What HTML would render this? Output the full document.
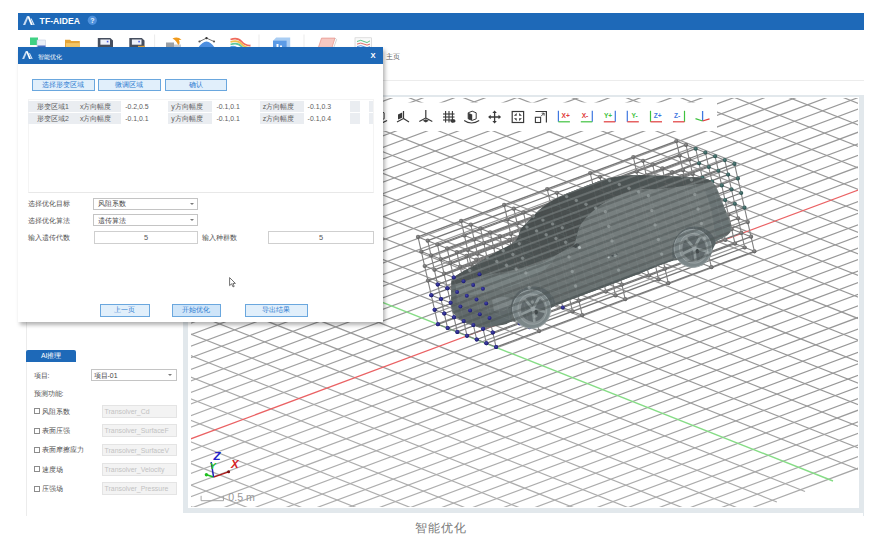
<!DOCTYPE html>
<html><head><meta charset="utf-8"><title>TF-AIDEA</title>
<style>
html,body{margin:0;padding:0;background:#fff;}
body{width:877px;height:548px;position:relative;overflow:hidden;font-family:"Liberation Sans",sans-serif;font-size:7px;color:#333;}
.abs{position:absolute;}

.tbar{left:18px;top:13px;width:846px;height:16.5px;background:#1e69b8;}
.ttl{font-size:8.6px;font-weight:bold;color:#fff;letter-spacing:0.05px;line-height:10px;white-space:nowrap;}
.frame{left:183px;top:94.5px;width:680.5px;height:418.5px;background:#e2e8ec;}
.inner{left:188px;top:97px;width:671px;height:410.5px;background:#fff;}
.lp{left:26px;top:322px;width:157px;height:194px;border-left:1px solid #ececec;box-sizing:border-box;background:#fff;}
.t7{font-size:6.75px;line-height:9px;white-space:nowrap;color:#505050;}
.dlg{left:18px;top:47px;width:365px;height:275px;background:#fff;box-shadow:1.5px 2.5px 4px rgba(0,0,0,0.3);}
.dttl{left:0;top:0;width:365px;height:16.7px;background:#1e69b8;}
.btn{top:31.7px;height:12.7px;border:1px solid #6aa7de;background:#e1effb;box-sizing:border-box;color:#2b7ad0;font-size:6.9px;line-height:10.5px;text-align:center;}
.list{left:9.5px;top:52px;width:346.5px;height:94px;border:1px solid #f4f4f4;border-bottom-color:#e8e8e8;box-sizing:border-box;}
.cell{height:10.9px;background:#eaedf1;}
.ct{font-size:6.9px;line-height:11px;color:#5c5c5c;white-space:nowrap;}
.combo{border:1px solid #c4c4c4;box-sizing:border-box;background:#fff;font-size:6.9px;color:#444;white-space:nowrap;}
.combo:after{content:"";position:absolute;right:3.2px;top:50%;margin-top:-1px;border:2.1px solid transparent;border-top:2.6px solid #7a7a7a;border-bottom:0;}
.inp{border:1px solid #cfcfcf;box-sizing:border-box;background:#fff;font-size:7.4px;color:#555;text-align:center;}
.dis{border:1px solid #e4e4e4;box-sizing:border-box;background:#f3f3f3;font-size:6.9px;color:#c2c2c2;white-space:nowrap;overflow:hidden;}
.cb{width:6.2px;height:6.2px;border:0.7px solid #8c8c8c;box-sizing:border-box;background:#fff;}

</style></head><body>
<div class="abs tbar"></div><svg class="abs" style="left:22.6px;top:15.6px" width="12.09" height="9.3" viewBox="0 0 13 10"><path d="M0 9.6 L4.2 0.4 H6.3 L2.4 9.6Z" fill="#c9dcf2"/><path d="M4.6 0.4 H6.7 L10.6 9.6 H8.4Z" fill="#fff"/><path d="M8.0 2.6 H9.3 L12.6 9.6 H11.2Z" fill="#dbe8f7"/></svg><div class="abs ttl" style="left:39.6px;top:15.6px;">TF-AIDEA</div><svg class="abs" style="left:87px;top:15px" width="11" height="11" viewBox="0 0 11 11"><circle cx="5.3" cy="5.3" r="4.6" fill="#4f92dd"/><text x="5.3" y="8" font-size="7" font-weight="bold" fill="#e8f1fb" text-anchor="middle" font-family="Liberation Sans, sans-serif">?</text></svg><svg class="abs" style="left:18px;top:29.5px" width="846" height="18" viewBox="18 29.5 846 18"><rect x="30" y="37" width="8" height="7.5" fill="#3fd184"/><rect x="37" y="39.5" width="8.5" height="8" fill="#e9eef7" stroke="#b8c4da" stroke-width="0.5"/><rect x="37.5" y="45" width="8" height="3" fill="#4a6fc4"/><path d="M65 39.2 h5 l1.3 1.4 h8.5 v7 h-14.8z" fill="#e5a437"/><rect x="66" y="42.6" width="14" height="5" fill="#f3c565"/><path d="M97.8 37.6 h12.5 l2.7 2.4 v8 h-15.2z" fill="#474f5f"/><rect x="100.39999999999999" y="39" width="9.6" height="5.2" fill="#eef1fa"/><rect x="106.8" y="40.3" width="1.6" height="1.6" fill="#4b5ce0"/><path d="M129.3 37.6 h12.5 l2.7 2.4 v8 h-15.2z" fill="#474f5f"/><rect x="131.9" y="39" width="9.6" height="5.2" fill="#eef1fa"/><rect x="138.3" y="40.3" width="1.6" height="1.6" fill="#4b5ce0"/><rect x="138" y="45.3" width="7" height="2.5" fill="#e3a23a"/><line x1="154.6" y1="34" x2="154.6" y2="47.5" stroke="#e6e6e6" stroke-width="0.8"/><rect x="166" y="42" width="8" height="6" fill="#9aa0a6"/><path d="M172.5 38 q5 -2.5 9 1.2 l-2.6 0.4 q1.6 3 -0.6 6 q-0.6 -4.6 -5.8 -7.6z" fill="#f09a1c"/><rect x="174" y="44" width="7" height="4" fill="#c9ccd0"/><path d="M198 47.5 q8.5 -13 17 0z" fill="#4d8fe0"/><path d="M199.5 41 l7 -3.4 l7.5 3.4" fill="none" stroke="#555" stroke-width="0.8"/><circle cx="206.5" cy="37.6" r="1.2" fill="#333"/><circle cx="199.5" cy="41" r="1.1" fill="#555"/><circle cx="214" cy="41" r="1.1" fill="#555"/><path d="M230.5 39 q7 -2.5 11 2 q4 4.5 9 4" fill="none" stroke="#ef6b5c" stroke-width="1.8"/><path d="M230.5 41.5 q7 -2.5 11 2 q3 3.4 7.5 4" fill="none" stroke="#f3c04c" stroke-width="1.8"/><path d="M230.5 44 q7 -2.5 11 2 q1 1.2 2 2" fill="none" stroke="#5fc8a0" stroke-width="1.8"/><path d="M230.5 46.5 q4 -1.4 7 1.4" fill="none" stroke="#58a6ea" stroke-width="1.8"/><line x1="259" y1="34" x2="259" y2="47.5" stroke="#e6e6e6" stroke-width="0.8"/><path d="M273 40.2 l3.2 -3.2 h14 v11 h-17.2z" fill="#a9cdf3"/><rect x="273" y="40.2" width="13.6" height="8" fill="#5b9be6"/><rect x="276.5" y="43.5" width="2" height="4.5" fill="#fff"/><rect x="280" y="45" width="2" height="3" fill="#fff"/><line x1="304" y1="34" x2="304" y2="47.5" stroke="#e6e6e6" stroke-width="0.8"/><path d="M321.5 37.6 h13.5 l-3.2 10 h-13.6z" fill="#f6c8c2" stroke="#e58f86" stroke-width="0.7"/><path d="M335 37.6 l1.6 1.4 l-3.2 9" fill="none" stroke="#bbb" stroke-width="0.6"/><rect x="355" y="37.3" width="16.5" height="11" fill="#fafafa" stroke="#c9c9c9" stroke-width="0.6"/><path d="M357 41 q4 -2.4 7 0 t6 -0.6" fill="none" stroke="#4fbf7a" stroke-width="0.9"/><path d="M357 43.6 q4 -2 7 0 t6 0" fill="none" stroke="#e0605a" stroke-width="0.9"/><path d="M357 46.2 q4 -2 7 0 t6 0" fill="none" stroke="#4f8fe0" stroke-width="0.9"/></svg><div class="abs t7" style="left:385.8px;top:52px;color:#555;">主页</div><div class="abs" style="left:383px;top:79.6px;width:481px;height:1px;background:#ececec"></div><div class="abs frame"></div><div class="abs" style="left:862.5px;top:94.5px;width:1.2px;height:421.5px;background:#e2e8ec"></div><div class="abs inner"></div>

<svg style="position:absolute;left:191px;top:98px" width="667" height="408.5" viewBox="191 98 667 408.5">
<defs>
<radialGradient id="gg" cx="0.42" cy="0.38" r="0.62"><stop offset="0" stop-color="#909090"/><stop offset="0.55" stop-color="#707070"/><stop offset="1" stop-color="#5e5e5e"/></radialGradient>
<radialGradient id="gb" cx="0.42" cy="0.38" r="0.62"><stop offset="0" stop-color="#4444ac"/><stop offset="1" stop-color="#18186e"/></radialGradient>
<radialGradient id="gt" cx="0.42" cy="0.38" r="0.62"><stop offset="0" stop-color="#55807c"/><stop offset="1" stop-color="#274c4a"/></radialGradient>
<linearGradient id="gside" x1="0" y1="0" x2="0.25" y2="1"><stop offset="0" stop-color="#7e8686"/><stop offset="0.55" stop-color="#747c7c"/><stop offset="1" stop-color="#646c6c"/></linearGradient>
<linearGradient id="gtop" x1="0" y1="1" x2="1" y2="0"><stop offset="0" stop-color="#535959"/><stop offset="0.5" stop-color="#484e4e"/><stop offset="1" stop-color="#515757"/></linearGradient>
<clipPath id="cb"><path d="M452.3 278C452.9 276.6 453.2 277.4 455 276.3C456.8 275.2 459.4 273.6 463 271.5C466.6 269.4 471.2 267 476.5 263.9C481.8 260.8 488.9 256.3 494.7 253C500.4 249.7 507.2 246.7 511 244.2C514.8 241.7 515.9 240.4 517.5 238C519.1 235.6 519.5 232 520.5 230C521.5 228 521.7 227.9 523.5 226C525.3 224.1 528.1 221.4 531.2 218.3C534.3 215.2 537.6 210.9 542.2 207.4C546.8 203.9 552.8 200.3 558.6 197.3C564.4 194.3 571.7 191.8 576.9 189.6C582.1 187.4 584.8 186.3 590 184.4C595.2 182.5 601.5 179.9 608.2 178.4C614.9 176.9 622.5 175.8 630.1 175.3C637.7 174.8 646 175.4 653.9 175.6C661.8 175.8 670 176.2 677.6 176.6C685.2 177 694 177.1 699.5 177.8C705 178.5 707.6 179 710.4 180.6C713.2 182.2 714.8 184.8 716.4 187.4C718 190.1 718.7 192.8 720.2 196.5C721.7 200.2 723.7 205.4 725.3 209.3C726.9 213.2 728.8 216.9 729.8 220.2C730.8 223.5 731.7 226.8 731.3 229.3C730.9 231.8 729.7 233.4 727.6 235.2C725.5 237 720.9 238.4 718.5 240C716.1 241.6 714.6 241.5 713 244.5C711.4 247.5 712.8 255.1 709 258C705.2 260.9 695.9 261.6 690 262C684.1 262.4 681.8 258.7 673.5 260.6C665.2 262.5 652.2 268.7 640 273.4C627.8 278.1 614.6 283.1 600 288.7C585.4 294.3 563.1 302.1 552.3 307C541.5 311.9 541.7 315.6 535 318C528.3 320.4 517.3 320.3 512.2 321.4C507.1 322.5 508.7 323.6 504.2 324.6C499.7 325.6 490.4 327.2 485 327.3C479.6 327.4 475.8 326.2 472 325.2C468.2 324.2 465.4 322.9 462.5 321.2C459.6 319.5 456.4 317 454.6 314.8C452.8 312.6 452.1 311.1 451.5 308C450.9 304.9 451.1 299.8 451.1 296C451.1 292.2 451.1 288 451.3 285C451.5 282 451.7 279.4 452.3 278Z"/></clipPath>
<clipPath id="ct"><path d="M452.3 278C452.7 276.6 453.2 277.4 455 276.3C456.8 275.2 459.4 273.6 463 271.5C466.6 269.4 471.2 267 476.5 263.9C481.8 260.8 488.9 256.3 494.7 253C500.4 249.7 507.2 246.7 511 244.2C514.8 241.7 515.9 240.4 517.5 238C519.1 235.6 519.5 232 520.5 230C521.5 228 521.7 227.9 523.5 226C525.3 224.1 528.1 221.4 531.2 218.3C534.3 215.2 537.6 210.9 542.2 207.4C546.8 203.9 552.8 200.3 558.6 197.3C564.4 194.3 571.7 191.8 576.9 189.6C582.1 187.4 584.8 186.3 590 184.4C595.2 182.5 601.5 179.9 608.2 178.4C614.9 176.9 622.5 175.8 630.1 175.3C637.7 174.8 646 175.4 653.9 175.6C661.8 175.8 670 176.2 677.6 176.6C685.2 177 694 177.1 699.5 177.8C705 178.5 709.2 179.8 710.4 180.6C711.6 181.4 710.8 181.6 706.8 182.4C702.8 183.2 694.3 184.4 686.3 185.5C678.3 186.6 667.2 188.3 659 189C650.8 189.7 644.8 188.1 636.8 189.8C628.8 191.5 618.3 195.5 611 199C603.7 202.5 598.1 206.6 593 211C587.9 215.4 583.2 220.3 580.2 225.6C577.2 230.9 576.8 239.2 574.7 243C572.6 246.8 570.7 246.2 567.7 248.2C564.7 250.1 561 252.2 556.8 254.7C552.5 257.1 546.7 261 542.2 262.9C537.7 264.8 534.3 265.1 530 266.2C525.7 267.3 521.6 268.2 516.6 269.3C511.6 270.4 505.2 271.5 500 272.6C494.8 273.7 490.6 274.6 485.6 275.7C480.6 276.8 475.5 278 470 279.5C464.5 281 455.8 284.8 452.8 284.5C449.9 284.2 451.9 279.4 452.3 278Z"/></clipPath>
<linearGradient id="ggrid" gradientUnits="userSpaceOnUse" x1="560" y1="97" x2="500" y2="507"><stop offset="0" stop-color="#999999"/><stop offset="0.6" stop-color="#969696"/><stop offset="0.85" stop-color="#aaaaaa"/><stop offset="1" stop-color="#aeaeae"/></linearGradient>
<filter id="bl" x="-2%" y="-2%" width="104%" height="104%"><feGaussianBlur stdDeviation="0.6"/></filter>
</defs>
<rect x="187" y="97" width="672" height="410" fill="#fff"/>
<g filter="url(#bl)">
<g stroke="url(#ggrid)" stroke-width="1.2" fill="none">
<line x1="-574.2" y1="446.3" x2="786" y2="-60.5"/>
<line x1="-570.3" y1="441.3" x2="159.9" y2="732"/>
<line x1="-559.2" y1="452.2" x2="801" y2="-54.5"/>
<line x1="-542.3" y1="430.9" x2="187.9" y2="721.6"/>
<line x1="-544.2" y1="458.2" x2="816.1" y2="-48.6"/>
<line x1="-514.3" y1="420.5" x2="216" y2="711.1"/>
<line x1="-529.2" y1="464.2" x2="831.1" y2="-42.6"/>
<line x1="-486.3" y1="410" x2="244.1" y2="700.7"/>
<line x1="-514.2" y1="470.1" x2="846.2" y2="-36.7"/>
<line x1="-458.3" y1="399.6" x2="272.1" y2="690.2"/>
<line x1="-499.2" y1="476.1" x2="861.2" y2="-30.8"/>
<line x1="-430.3" y1="389.2" x2="300.2" y2="679.7"/>
<line x1="-484.2" y1="482.1" x2="876.3" y2="-24.8"/>
<line x1="-402.2" y1="378.7" x2="328.2" y2="669.3"/>
<line x1="-469.2" y1="488.1" x2="891.3" y2="-18.9"/>
<line x1="-374.2" y1="368.3" x2="356.3" y2="658.8"/>
<line x1="-454.2" y1="494" x2="906.4" y2="-12.9"/>
<line x1="-346.2" y1="357.9" x2="384.3" y2="648.4"/>
<line x1="-439.2" y1="500" x2="921.4" y2="-7"/>
<line x1="-318.2" y1="347.4" x2="412.4" y2="637.9"/>
<line x1="-424.2" y1="506" x2="936.5" y2="-1"/>
<line x1="-290.2" y1="337" x2="440.4" y2="627.4"/>
<line x1="-409.2" y1="512" x2="951.5" y2="4.9"/>
<line x1="-262.2" y1="326.6" x2="468.5" y2="617"/>
<line x1="-394.2" y1="517.9" x2="966.6" y2="10.9"/>
<line x1="-234.2" y1="316.2" x2="496.5" y2="606.5"/>
<line x1="-379.2" y1="523.9" x2="981.6" y2="16.8"/>
<line x1="-206.2" y1="305.7" x2="524.6" y2="596.1"/>
<line x1="-364.2" y1="529.9" x2="996.7" y2="22.8"/>
<line x1="-178.2" y1="295.3" x2="552.6" y2="585.6"/>
<line x1="-349.2" y1="535.9" x2="1011.7" y2="28.7"/>
<line x1="-150.3" y1="284.9" x2="580.6" y2="575.1"/>
<line x1="-334.2" y1="541.8" x2="1026.8" y2="34.7"/>
<line x1="-122.3" y1="274.4" x2="608.7" y2="564.7"/>
<line x1="-319.1" y1="547.8" x2="1041.9" y2="40.6"/>
<line x1="-94.3" y1="264" x2="636.7" y2="554.2"/>
<line x1="-304.1" y1="553.8" x2="1056.9" y2="46.6"/>
<line x1="-66.3" y1="253.6" x2="664.8" y2="543.8"/>
<line x1="-289.1" y1="559.8" x2="1072" y2="52.5"/>
<line x1="-38.3" y1="243.1" x2="692.8" y2="533.3"/>
<line x1="-274.1" y1="565.7" x2="1087.1" y2="58.5"/>
<line x1="-10.3" y1="232.7" x2="720.9" y2="522.9"/>
<line x1="-259.1" y1="571.7" x2="1102.1" y2="64.4"/>
<line x1="17.7" y1="222.3" x2="748.9" y2="512.4"/>
<line x1="-244" y1="577.7" x2="1117.2" y2="70.4"/>
<line x1="45.7" y1="211.9" x2="776.9" y2="502"/>
<line x1="-229" y1="583.7" x2="1132.3" y2="76.3"/>
<line x1="73.7" y1="201.4" x2="805" y2="491.5"/>
<line x1="-199" y1="595.7" x2="1162.4" y2="88.2"/>
<line x1="129.7" y1="180.6" x2="861" y2="470.6"/>
<line x1="-184" y1="601.6" x2="1177.5" y2="94.2"/>
<line x1="157.6" y1="170.2" x2="889.1" y2="460.1"/>
<line x1="-168.9" y1="607.6" x2="1192.6" y2="100.1"/>
<line x1="185.6" y1="159.7" x2="917.1" y2="449.7"/>
<line x1="-153.9" y1="613.6" x2="1207.6" y2="106.1"/>
<line x1="213.6" y1="149.3" x2="945.1" y2="439.2"/>
<line x1="-138.9" y1="619.6" x2="1222.7" y2="112.1"/>
<line x1="241.6" y1="138.9" x2="973.2" y2="428.8"/>
<line x1="-123.8" y1="625.6" x2="1237.8" y2="118"/>
<line x1="269.6" y1="128.5" x2="1001.2" y2="418.3"/>
<line x1="-108.8" y1="631.6" x2="1252.9" y2="124"/>
<line x1="297.6" y1="118" x2="1029.2" y2="407.9"/>
<line x1="-93.8" y1="637.5" x2="1268" y2="129.9"/>
<line x1="325.5" y1="107.6" x2="1057.3" y2="397.4"/>
<line x1="-78.7" y1="643.5" x2="1283" y2="135.9"/>
<line x1="353.5" y1="97.2" x2="1085.3" y2="387"/>
<line x1="-63.7" y1="649.5" x2="1298.1" y2="141.8"/>
<line x1="381.5" y1="86.8" x2="1113.3" y2="376.5"/>
<line x1="-48.7" y1="655.5" x2="1313.2" y2="147.8"/>
<line x1="409.5" y1="76.3" x2="1141.3" y2="366.1"/>
<line x1="-33.6" y1="661.5" x2="1328.3" y2="153.8"/>
<line x1="437.4" y1="65.9" x2="1169.4" y2="355.6"/>
<line x1="-18.6" y1="667.5" x2="1343.4" y2="159.7"/>
<line x1="465.4" y1="55.5" x2="1197.4" y2="345.2"/>
<line x1="-3.5" y1="673.5" x2="1358.5" y2="165.7"/>
<line x1="493.4" y1="45.1" x2="1225.4" y2="334.7"/>
<line x1="11.5" y1="679.5" x2="1373.6" y2="171.6"/>
<line x1="521.4" y1="34.6" x2="1253.4" y2="324.3"/>
<line x1="26.5" y1="685.4" x2="1388.7" y2="177.6"/>
<line x1="549.3" y1="24.2" x2="1281.5" y2="313.8"/>
<line x1="41.6" y1="691.4" x2="1403.8" y2="183.6"/>
<line x1="577.3" y1="13.8" x2="1309.5" y2="303.4"/>
<line x1="56.6" y1="697.4" x2="1418.9" y2="189.5"/>
<line x1="605.3" y1="3.4" x2="1337.5" y2="292.9"/>
<line x1="71.7" y1="703.4" x2="1434" y2="195.5"/>
<line x1="633.3" y1="-7" x2="1365.5" y2="282.5"/>
<line x1="86.7" y1="709.4" x2="1449.1" y2="201.5"/>
<line x1="661.2" y1="-17.5" x2="1393.5" y2="272"/>
<line x1="101.8" y1="715.4" x2="1464.2" y2="207.4"/>
<line x1="689.2" y1="-27.9" x2="1421.5" y2="261.6"/>
<line x1="116.8" y1="721.4" x2="1479.3" y2="213.4"/>
<line x1="717.2" y1="-38.3" x2="1449.6" y2="251.1"/>
<line x1="131.9" y1="727.4" x2="1494.4" y2="219.4"/>
<line x1="745.1" y1="-48.7" x2="1477.6" y2="240.7"/>
<line x1="147" y1="733.4" x2="1509.5" y2="225.3"/>
<line x1="773.1" y1="-59.1" x2="1505.6" y2="230.3"/>
<line x1="-214" y1="589.7" x2="1147.3" y2="82.3" stroke="#ea6264"/>
<line x1="101.7" y1="191" x2="833" y2="481" stroke="#86dc86" stroke-width="1.4"/>
</g>
<g stroke="#767676" stroke-width="1.3" fill="none">
<line x1="437.9" y1="324.3" x2="696.2" y2="228.5"/>
<line x1="434.6" y1="309.7" x2="692.9" y2="213.9"/>
<line x1="431.3" y1="295.2" x2="689.6" y2="199.3"/>
<line x1="428" y1="280.6" x2="686.3" y2="184.8"/>
<line x1="424.7" y1="266" x2="683" y2="170.2"/>
<line x1="421.3" y1="251.5" x2="679.6" y2="155.6"/>
<line x1="418" y1="236.9" x2="676.3" y2="141.1"/>
<line x1="447.6" y1="328.1" x2="705.9" y2="232.3"/>
<line x1="444.3" y1="313.5" x2="702.6" y2="217.7"/>
<line x1="441" y1="299" x2="699.3" y2="203.1"/>
<line x1="437.7" y1="284.4" x2="696" y2="188.6"/>
<line x1="434.4" y1="269.8" x2="692.7" y2="174"/>
<line x1="431" y1="255.3" x2="689.4" y2="159.4"/>
<line x1="427.7" y1="240.7" x2="686" y2="144.9"/>
<line x1="457.3" y1="331.9" x2="715.6" y2="236.1"/>
<line x1="454" y1="317.3" x2="712.3" y2="221.5"/>
<line x1="450.7" y1="302.8" x2="709" y2="206.9"/>
<line x1="447.4" y1="288.2" x2="705.7" y2="192.4"/>
<line x1="444.1" y1="273.6" x2="702.4" y2="177.8"/>
<line x1="440.7" y1="259.1" x2="699" y2="163.2"/>
<line x1="437.4" y1="244.5" x2="695.7" y2="148.7"/>
<line x1="467" y1="335.7" x2="725.3" y2="239.9"/>
<line x1="463.7" y1="321.1" x2="722" y2="225.3"/>
<line x1="460.4" y1="306.6" x2="718.7" y2="210.7"/>
<line x1="457.1" y1="292" x2="715.4" y2="196.2"/>
<line x1="453.8" y1="277.4" x2="712.1" y2="181.6"/>
<line x1="450.4" y1="262.9" x2="708.8" y2="167"/>
<line x1="447.1" y1="248.3" x2="705.4" y2="152.5"/>
<line x1="476.7" y1="339.5" x2="735" y2="243.7"/>
<line x1="473.4" y1="324.9" x2="731.7" y2="229.1"/>
<line x1="470.1" y1="310.4" x2="728.4" y2="214.5"/>
<line x1="466.8" y1="295.8" x2="725.1" y2="200"/>
<line x1="463.5" y1="281.2" x2="721.8" y2="185.4"/>
<line x1="460.1" y1="266.6" x2="718.4" y2="170.8"/>
<line x1="456.8" y1="252.1" x2="715.1" y2="156.3"/>
<line x1="486.4" y1="343.3" x2="744.7" y2="247.5"/>
<line x1="483.1" y1="328.7" x2="741.4" y2="232.9"/>
<line x1="479.8" y1="314.2" x2="738.1" y2="218.3"/>
<line x1="476.5" y1="299.6" x2="734.8" y2="203.8"/>
<line x1="473.2" y1="285" x2="731.5" y2="189.2"/>
<line x1="469.8" y1="270.5" x2="728.1" y2="174.6"/>
<line x1="466.5" y1="255.9" x2="724.8" y2="160.1"/>
<line x1="496.1" y1="347.1" x2="754.4" y2="251.3"/>
<line x1="492.8" y1="332.5" x2="751.1" y2="236.7"/>
<line x1="489.5" y1="318" x2="747.8" y2="222.1"/>
<line x1="486.2" y1="303.4" x2="744.5" y2="207.6"/>
<line x1="482.9" y1="288.8" x2="741.2" y2="193"/>
<line x1="479.5" y1="274.2" x2="737.9" y2="178.4"/>
<line x1="476.2" y1="259.7" x2="734.5" y2="163.9"/>
</g>
<g stroke="#808080" stroke-width="1.1" fill="none">
<line x1="437.9" y1="324.3" x2="496.1" y2="347.1"/>
<line x1="434.6" y1="309.7" x2="492.8" y2="332.5"/>
<line x1="431.3" y1="295.2" x2="489.5" y2="318"/>
<line x1="428" y1="280.6" x2="486.2" y2="303.4"/>
<line x1="424.7" y1="266" x2="482.9" y2="288.8"/>
<line x1="421.3" y1="251.5" x2="479.5" y2="274.2"/>
<line x1="418" y1="236.9" x2="476.2" y2="259.7"/>
<line x1="437.9" y1="324.3" x2="418" y2="236.9"/>
<line x1="447.6" y1="328.1" x2="427.7" y2="240.7"/>
<line x1="457.3" y1="331.9" x2="437.4" y2="244.5"/>
<line x1="467" y1="335.7" x2="447.1" y2="248.3"/>
<line x1="476.7" y1="339.5" x2="456.8" y2="252.1"/>
<line x1="486.4" y1="343.3" x2="466.5" y2="255.9"/>
<line x1="496.1" y1="347.1" x2="476.2" y2="259.7"/>
<line x1="480.9" y1="308.3" x2="539.1" y2="331.1"/>
<line x1="477.6" y1="293.8" x2="535.8" y2="316.6"/>
<line x1="474.3" y1="279.2" x2="532.5" y2="302"/>
<line x1="471" y1="264.6" x2="529.2" y2="287.4"/>
<line x1="467.7" y1="250" x2="525.9" y2="272.9"/>
<line x1="464.4" y1="235.5" x2="522.6" y2="258.3"/>
<line x1="461.1" y1="220.9" x2="519.3" y2="243.7"/>
<line x1="480.9" y1="308.3" x2="461.1" y2="220.9"/>
<line x1="490.6" y1="312.1" x2="470.8" y2="224.7"/>
<line x1="500.3" y1="315.9" x2="480.5" y2="228.5"/>
<line x1="510.1" y1="319.7" x2="490.2" y2="232.3"/>
<line x1="519.8" y1="323.5" x2="499.9" y2="236.1"/>
<line x1="529.5" y1="327.3" x2="509.6" y2="239.9"/>
<line x1="539.1" y1="331.1" x2="519.3" y2="243.7"/>
<line x1="524" y1="292.4" x2="582.2" y2="315.2"/>
<line x1="520.7" y1="277.8" x2="578.9" y2="300.6"/>
<line x1="517.4" y1="263.2" x2="575.6" y2="286"/>
<line x1="514.1" y1="248.7" x2="572.3" y2="271.5"/>
<line x1="510.8" y1="234.1" x2="569" y2="256.9"/>
<line x1="507.4" y1="219.5" x2="565.7" y2="242.3"/>
<line x1="504.1" y1="204.9" x2="562.3" y2="227.7"/>
<line x1="524" y1="292.4" x2="504.1" y2="204.9"/>
<line x1="533.7" y1="296.2" x2="513.8" y2="208.7"/>
<line x1="543.4" y1="300" x2="523.5" y2="212.5"/>
<line x1="553.1" y1="303.8" x2="533.2" y2="216.3"/>
<line x1="562.8" y1="307.6" x2="542.9" y2="220.1"/>
<line x1="572.5" y1="311.4" x2="552.6" y2="223.9"/>
<line x1="582.2" y1="315.2" x2="562.3" y2="227.7"/>
<line x1="567" y1="276.4" x2="625.2" y2="299.2"/>
<line x1="563.7" y1="261.8" x2="621.9" y2="284.6"/>
<line x1="560.4" y1="247.2" x2="618.6" y2="270.1"/>
<line x1="557.1" y1="232.7" x2="615.3" y2="255.5"/>
<line x1="553.8" y1="218.1" x2="612" y2="240.9"/>
<line x1="550.5" y1="203.5" x2="608.7" y2="226.3"/>
<line x1="547.2" y1="189" x2="605.4" y2="211.8"/>
<line x1="567" y1="276.4" x2="547.2" y2="189"/>
<line x1="576.8" y1="280.2" x2="556.9" y2="192.8"/>
<line x1="586.4" y1="284" x2="566.6" y2="196.6"/>
<line x1="596.1" y1="287.8" x2="576.3" y2="200.4"/>
<line x1="605.8" y1="291.6" x2="586" y2="204.2"/>
<line x1="615.5" y1="295.4" x2="595.7" y2="208"/>
<line x1="625.2" y1="299.2" x2="605.4" y2="211.8"/>
<line x1="610.1" y1="260.4" x2="668.3" y2="283.2"/>
<line x1="606.8" y1="245.9" x2="665" y2="268.7"/>
<line x1="603.5" y1="231.3" x2="661.7" y2="254.1"/>
<line x1="600.2" y1="216.7" x2="658.4" y2="239.5"/>
<line x1="596.9" y1="202.1" x2="655.1" y2="224.9"/>
<line x1="593.5" y1="187.6" x2="651.8" y2="210.4"/>
<line x1="590.2" y1="173" x2="648.4" y2="195.8"/>
<line x1="610.1" y1="260.4" x2="590.2" y2="173"/>
<line x1="619.8" y1="264.2" x2="599.9" y2="176.8"/>
<line x1="629.5" y1="268" x2="609.6" y2="180.6"/>
<line x1="639.2" y1="271.8" x2="619.3" y2="184.4"/>
<line x1="648.9" y1="275.6" x2="629" y2="188.2"/>
<line x1="658.6" y1="279.4" x2="638.7" y2="192"/>
<line x1="668.3" y1="283.2" x2="648.4" y2="195.8"/>
<line x1="653.1" y1="244.4" x2="711.4" y2="267.2"/>
<line x1="649.8" y1="229.9" x2="708" y2="252.7"/>
<line x1="646.5" y1="215.3" x2="704.7" y2="238.1"/>
<line x1="643.2" y1="200.7" x2="701.4" y2="223.5"/>
<line x1="639.9" y1="186.2" x2="698.1" y2="209"/>
<line x1="636.6" y1="171.6" x2="694.8" y2="194.4"/>
<line x1="633.3" y1="157" x2="691.5" y2="179.8"/>
<line x1="653.1" y1="244.4" x2="633.3" y2="157"/>
<line x1="662.9" y1="248.2" x2="643" y2="160.8"/>
<line x1="672.5" y1="252" x2="652.7" y2="164.6"/>
<line x1="682.2" y1="255.8" x2="662.4" y2="168.4"/>
<line x1="691.9" y1="259.6" x2="672.1" y2="172.2"/>
<line x1="701.6" y1="263.4" x2="681.8" y2="176"/>
<line x1="711.4" y1="267.2" x2="691.5" y2="179.8"/>
<line x1="696.2" y1="228.5" x2="754.4" y2="251.3"/>
<line x1="692.9" y1="213.9" x2="751.1" y2="236.7"/>
<line x1="689.6" y1="199.3" x2="747.8" y2="222.1"/>
<line x1="686.3" y1="184.8" x2="744.5" y2="207.6"/>
<line x1="683" y1="170.2" x2="741.2" y2="193"/>
<line x1="679.6" y1="155.6" x2="737.9" y2="178.4"/>
<line x1="676.3" y1="141.1" x2="734.5" y2="163.9"/>
<line x1="696.2" y1="228.5" x2="676.3" y2="141.1"/>
<line x1="705.9" y1="232.3" x2="686" y2="144.9"/>
<line x1="715.6" y1="236.1" x2="695.7" y2="148.7"/>
<line x1="725.3" y1="239.9" x2="705.4" y2="152.5"/>
<line x1="735" y1="243.7" x2="715.1" y2="156.3"/>
<line x1="744.7" y1="247.5" x2="724.8" y2="160.1"/>
<line x1="754.4" y1="251.3" x2="734.5" y2="163.9"/>
</g>
<g><circle cx="437.9" cy="324.3" r="2.0" fill="url(#gb)"/>
<circle cx="434.6" cy="309.7" r="2.0" fill="url(#gb)"/>
<circle cx="431.3" cy="295.2" r="2.0" fill="url(#gb)"/>
<circle cx="428" cy="280.6" r="2.1" fill="url(#gg)"/>
<circle cx="424.7" cy="266" r="2.1" fill="url(#gg)"/>
<circle cx="421.3" cy="251.5" r="2.1" fill="url(#gg)"/>
<circle cx="418" cy="236.9" r="2.1" fill="url(#gg)"/>
<circle cx="447.6" cy="328.1" r="2.0" fill="url(#gb)"/>
<circle cx="444.3" cy="313.5" r="2.0" fill="url(#gb)"/>
<circle cx="441" cy="299" r="2.0" fill="url(#gb)"/>
<circle cx="437.7" cy="284.4" r="2.0" fill="url(#gb)"/>
<circle cx="434.4" cy="269.8" r="2.1" fill="url(#gg)"/>
<circle cx="431" cy="255.3" r="2.1" fill="url(#gg)"/>
<circle cx="427.7" cy="240.7" r="2.1" fill="url(#gg)"/>
<circle cx="457.3" cy="331.9" r="2.0" fill="url(#gb)"/>
<circle cx="454" cy="317.3" r="2.0" fill="url(#gb)"/>
<circle cx="450.7" cy="302.8" r="2.0" fill="url(#gb)"/>
<circle cx="447.4" cy="288.2" r="2.0" fill="url(#gb)"/>
<circle cx="444.1" cy="273.6" r="2.1" fill="url(#gg)"/>
<circle cx="440.7" cy="259.1" r="2.1" fill="url(#gg)"/>
<circle cx="437.4" cy="244.5" r="2.1" fill="url(#gg)"/>
<circle cx="467" cy="335.7" r="2.0" fill="url(#gb)"/>
<circle cx="463.7" cy="321.1" r="2.0" fill="url(#gb)"/>
<circle cx="460.4" cy="306.6" r="2.0" fill="url(#gb)"/>
<circle cx="457.1" cy="292" r="2.0" fill="url(#gb)"/>
<circle cx="453.8" cy="277.4" r="2.0" fill="url(#gb)"/>
<circle cx="450.4" cy="262.9" r="2.1" fill="url(#gg)"/>
<circle cx="447.1" cy="248.3" r="2.1" fill="url(#gg)"/>
<circle cx="476.7" cy="339.5" r="2.0" fill="url(#gb)"/>
<circle cx="473.4" cy="324.9" r="2.0" fill="url(#gb)"/>
<circle cx="470.1" cy="310.4" r="2.0" fill="url(#gb)"/>
<circle cx="466.8" cy="295.8" r="2.0" fill="url(#gb)"/>
<circle cx="463.5" cy="281.2" r="2.0" fill="url(#gb)"/>
<circle cx="460.1" cy="266.6" r="2.1" fill="url(#gg)"/>
<circle cx="456.8" cy="252.1" r="2.1" fill="url(#gg)"/>
<circle cx="486.4" cy="343.3" r="2.0" fill="url(#gb)"/>
<circle cx="483.1" cy="328.7" r="2.0" fill="url(#gb)"/>
<circle cx="479.8" cy="314.2" r="2.0" fill="url(#gb)"/>
<circle cx="476.5" cy="299.6" r="2.0" fill="url(#gb)"/>
<circle cx="473.2" cy="285" r="2.0" fill="url(#gb)"/>
<circle cx="469.8" cy="270.5" r="2.1" fill="url(#gg)"/>
<circle cx="466.5" cy="255.9" r="2.1" fill="url(#gg)"/>
<circle cx="496.1" cy="347.1" r="2.0" fill="url(#gb)"/>
<circle cx="492.8" cy="332.5" r="2.0" fill="url(#gb)"/>
<circle cx="489.5" cy="318" r="2.0" fill="url(#gb)"/>
<circle cx="486.2" cy="303.4" r="2.0" fill="url(#gb)"/>
<circle cx="482.9" cy="288.8" r="2.0" fill="url(#gb)"/>
<circle cx="479.5" cy="274.2" r="2.0" fill="url(#gb)"/>
<circle cx="476.2" cy="259.7" r="2.1" fill="url(#gg)"/>
<circle cx="480.9" cy="308.3" r="2.0" fill="url(#gb)"/>
<circle cx="477.6" cy="293.8" r="2.1" fill="url(#gg)"/>
<circle cx="474.3" cy="279.2" r="2.1" fill="url(#gg)"/>
<circle cx="471" cy="264.6" r="2.1" fill="url(#gg)"/>
<circle cx="467.7" cy="250" r="2.1" fill="url(#gg)"/>
<circle cx="464.4" cy="235.5" r="2.1" fill="url(#gg)"/>
<circle cx="461.1" cy="220.9" r="2.1" fill="url(#gg)"/>
<circle cx="490.6" cy="312.1" r="2.0" fill="url(#gb)"/>
<circle cx="487.3" cy="297.6" r="2.1" fill="url(#gg)"/>
<circle cx="484" cy="283" r="2.1" fill="url(#gg)"/>
<circle cx="480.7" cy="268.4" r="2.1" fill="url(#gg)"/>
<circle cx="477.4" cy="253.8" r="2.1" fill="url(#gg)"/>
<circle cx="474.1" cy="239.3" r="2.1" fill="url(#gg)"/>
<circle cx="470.8" cy="224.7" r="2.1" fill="url(#gg)"/>
<circle cx="500.3" cy="315.9" r="2.0" fill="url(#gb)"/>
<circle cx="497" cy="301.4" r="2.1" fill="url(#gg)"/>
<circle cx="493.7" cy="286.8" r="2.1" fill="url(#gg)"/>
<circle cx="490.4" cy="272.2" r="2.1" fill="url(#gg)"/>
<circle cx="487.1" cy="257.6" r="2.1" fill="url(#gg)"/>
<circle cx="483.8" cy="243.1" r="2.1" fill="url(#gg)"/>
<circle cx="480.5" cy="228.5" r="2.1" fill="url(#gg)"/>
<circle cx="510.1" cy="319.7" r="2.0" fill="url(#gb)"/>
<circle cx="506.7" cy="305.2" r="2.1" fill="url(#gg)"/>
<circle cx="503.4" cy="290.6" r="2.1" fill="url(#gg)"/>
<circle cx="500.1" cy="276" r="2.1" fill="url(#gg)"/>
<circle cx="496.8" cy="261.4" r="2.1" fill="url(#gg)"/>
<circle cx="493.5" cy="246.9" r="2.1" fill="url(#gg)"/>
<circle cx="490.2" cy="232.3" r="2.1" fill="url(#gg)"/>
<circle cx="519.8" cy="323.5" r="2.0" fill="url(#gb)"/>
<circle cx="516.4" cy="309" r="2.1" fill="url(#gg)"/>
<circle cx="513.1" cy="294.4" r="2.1" fill="url(#gg)"/>
<circle cx="509.8" cy="279.8" r="2.1" fill="url(#gg)"/>
<circle cx="506.5" cy="265.2" r="2.1" fill="url(#gg)"/>
<circle cx="503.2" cy="250.7" r="2.1" fill="url(#gg)"/>
<circle cx="499.9" cy="236.1" r="2.1" fill="url(#gg)"/>
<circle cx="529.5" cy="327.3" r="2.0" fill="url(#gb)"/>
<circle cx="526.1" cy="312.8" r="2.1" fill="url(#gg)"/>
<circle cx="522.8" cy="298.2" r="2.1" fill="url(#gg)"/>
<circle cx="519.5" cy="283.6" r="2.1" fill="url(#gg)"/>
<circle cx="516.2" cy="269" r="2.1" fill="url(#gg)"/>
<circle cx="512.9" cy="254.5" r="2.1" fill="url(#gg)"/>
<circle cx="509.6" cy="239.9" r="2.1" fill="url(#gg)"/>
<circle cx="539.1" cy="331.1" r="2.1" fill="url(#gg)"/>
<circle cx="535.8" cy="316.6" r="2.1" fill="url(#gg)"/>
<circle cx="532.5" cy="302" r="2.1" fill="url(#gg)"/>
<circle cx="529.2" cy="287.4" r="2.1" fill="url(#gg)"/>
<circle cx="525.9" cy="272.9" r="2.1" fill="url(#gg)"/>
<circle cx="522.6" cy="258.3" r="2.1" fill="url(#gg)"/>
<circle cx="519.3" cy="243.7" r="2.1" fill="url(#gg)"/>
<circle cx="524" cy="292.4" r="2.0" fill="url(#gb)"/>
<circle cx="520.7" cy="277.8" r="2.1" fill="url(#gg)"/>
<circle cx="517.4" cy="263.2" r="2.1" fill="url(#gg)"/>
<circle cx="514.1" cy="248.7" r="2.1" fill="url(#gg)"/>
<circle cx="510.8" cy="234.1" r="2.1" fill="url(#gg)"/>
<circle cx="507.4" cy="219.5" r="2.1" fill="url(#gg)"/>
<circle cx="504.1" cy="204.9" r="2.1" fill="url(#gg)"/>
<circle cx="533.7" cy="296.2" r="2.0" fill="url(#gb)"/>
<circle cx="530.4" cy="281.6" r="2.1" fill="url(#gg)"/>
<circle cx="527.1" cy="267" r="2.1" fill="url(#gg)"/>
<circle cx="523.8" cy="252.5" r="2.1" fill="url(#gg)"/>
<circle cx="520.5" cy="237.9" r="2.1" fill="url(#gg)"/>
<circle cx="517.2" cy="223.3" r="2.1" fill="url(#gg)"/>
<circle cx="513.8" cy="208.7" r="2.1" fill="url(#gg)"/>
<circle cx="543.4" cy="300" r="2.0" fill="url(#gb)"/>
<circle cx="540.1" cy="285.4" r="2.1" fill="url(#gg)"/>
<circle cx="536.8" cy="270.8" r="2.1" fill="url(#gg)"/>
<circle cx="533.5" cy="256.3" r="2.1" fill="url(#gg)"/>
<circle cx="530.2" cy="241.7" r="2.1" fill="url(#gg)"/>
<circle cx="526.9" cy="227.1" r="2.1" fill="url(#gg)"/>
<circle cx="523.5" cy="212.5" r="2.1" fill="url(#gg)"/>
<circle cx="553.1" cy="303.8" r="2.0" fill="url(#gb)"/>
<circle cx="549.8" cy="289.2" r="2.1" fill="url(#gg)"/>
<circle cx="546.5" cy="274.6" r="2.1" fill="url(#gg)"/>
<circle cx="543.2" cy="260.1" r="2.1" fill="url(#gg)"/>
<circle cx="539.9" cy="245.5" r="2.1" fill="url(#gg)"/>
<circle cx="536.6" cy="230.9" r="2.1" fill="url(#gg)"/>
<circle cx="533.2" cy="216.3" r="2.1" fill="url(#gg)"/>
<circle cx="562.8" cy="307.6" r="2.0" fill="url(#gb)"/>
<circle cx="559.5" cy="293" r="2.1" fill="url(#gg)"/>
<circle cx="556.2" cy="278.4" r="2.1" fill="url(#gg)"/>
<circle cx="552.9" cy="263.9" r="2.1" fill="url(#gg)"/>
<circle cx="549.6" cy="249.3" r="2.1" fill="url(#gg)"/>
<circle cx="546.2" cy="234.7" r="2.1" fill="url(#gg)"/>
<circle cx="542.9" cy="220.1" r="2.1" fill="url(#gg)"/>
<circle cx="572.5" cy="311.4" r="2.1" fill="url(#gg)"/>
<circle cx="569.2" cy="296.8" r="2.1" fill="url(#gg)"/>
<circle cx="565.9" cy="282.2" r="2.1" fill="url(#gg)"/>
<circle cx="562.6" cy="267.7" r="2.1" fill="url(#gg)"/>
<circle cx="559.3" cy="253.1" r="2.1" fill="url(#gg)"/>
<circle cx="556" cy="238.5" r="2.1" fill="url(#gg)"/>
<circle cx="552.6" cy="223.9" r="2.1" fill="url(#gg)"/>
<circle cx="582.2" cy="315.2" r="2.1" fill="url(#gg)"/>
<circle cx="578.9" cy="300.6" r="2.1" fill="url(#gg)"/>
<circle cx="575.6" cy="286" r="2.1" fill="url(#gg)"/>
<circle cx="572.3" cy="271.5" r="2.1" fill="url(#gg)"/>
<circle cx="569" cy="256.9" r="2.1" fill="url(#gg)"/>
<circle cx="565.7" cy="242.3" r="2.1" fill="url(#gg)"/>
<circle cx="562.3" cy="227.7" r="2.1" fill="url(#gg)"/>
<circle cx="567" cy="276.4" r="2.1" fill="url(#gg)"/>
<circle cx="563.7" cy="261.8" r="2.1" fill="url(#gg)"/>
<circle cx="560.4" cy="247.2" r="2.1" fill="url(#gg)"/>
<circle cx="557.1" cy="232.7" r="2.1" fill="url(#gg)"/>
<circle cx="553.8" cy="218.1" r="2.1" fill="url(#gg)"/>
<circle cx="550.5" cy="203.5" r="2.1" fill="url(#gg)"/>
<circle cx="547.2" cy="189" r="2.1" fill="url(#gg)"/>
<circle cx="576.8" cy="280.2" r="2.1" fill="url(#gg)"/>
<circle cx="573.4" cy="265.6" r="2.1" fill="url(#gg)"/>
<circle cx="570.1" cy="251.1" r="2.1" fill="url(#gg)"/>
<circle cx="566.8" cy="236.5" r="2.1" fill="url(#gg)"/>
<circle cx="563.5" cy="221.9" r="2.1" fill="url(#gg)"/>
<circle cx="560.2" cy="207.3" r="2.1" fill="url(#gg)"/>
<circle cx="556.9" cy="192.8" r="2.1" fill="url(#gg)"/>
<circle cx="586.4" cy="284" r="2.1" fill="url(#gg)"/>
<circle cx="583.1" cy="269.4" r="2.1" fill="url(#gg)"/>
<circle cx="579.8" cy="254.9" r="2.1" fill="url(#gg)"/>
<circle cx="576.5" cy="240.3" r="2.1" fill="url(#gg)"/>
<circle cx="573.2" cy="225.7" r="2.1" fill="url(#gg)"/>
<circle cx="569.9" cy="211.1" r="2.1" fill="url(#gg)"/>
<circle cx="566.6" cy="196.6" r="2.1" fill="url(#gg)"/>
<circle cx="596.1" cy="287.8" r="2.1" fill="url(#gg)"/>
<circle cx="592.8" cy="273.2" r="2.1" fill="url(#gg)"/>
<circle cx="589.5" cy="258.6" r="2.1" fill="url(#gg)"/>
<circle cx="586.2" cy="244.1" r="2.1" fill="url(#gg)"/>
<circle cx="582.9" cy="229.5" r="2.1" fill="url(#gg)"/>
<circle cx="579.6" cy="214.9" r="2.1" fill="url(#gg)"/>
<circle cx="576.3" cy="200.4" r="2.1" fill="url(#gg)"/>
<circle cx="605.8" cy="291.6" r="2.1" fill="url(#gg)"/>
<circle cx="602.5" cy="277" r="2.1" fill="url(#gg)"/>
<circle cx="599.2" cy="262.4" r="2.1" fill="url(#gg)"/>
<circle cx="595.9" cy="247.9" r="2.1" fill="url(#gg)"/>
<circle cx="592.6" cy="233.3" r="2.1" fill="url(#gg)"/>
<circle cx="589.3" cy="218.7" r="2.1" fill="url(#gg)"/>
<circle cx="586" cy="204.2" r="2.1" fill="url(#gg)"/>
<circle cx="615.5" cy="295.4" r="2.1" fill="url(#gg)"/>
<circle cx="612.2" cy="280.8" r="2.1" fill="url(#gg)"/>
<circle cx="608.9" cy="266.2" r="2.1" fill="url(#gg)"/>
<circle cx="605.6" cy="251.7" r="2.1" fill="url(#gg)"/>
<circle cx="602.3" cy="237.1" r="2.1" fill="url(#gg)"/>
<circle cx="599" cy="222.5" r="2.1" fill="url(#gg)"/>
<circle cx="595.7" cy="208" r="2.1" fill="url(#gg)"/>
<circle cx="625.2" cy="299.2" r="2.1" fill="url(#gg)"/>
<circle cx="621.9" cy="284.6" r="2.1" fill="url(#gg)"/>
<circle cx="618.6" cy="270.1" r="2.1" fill="url(#gg)"/>
<circle cx="615.3" cy="255.5" r="2.1" fill="url(#gg)"/>
<circle cx="612" cy="240.9" r="2.1" fill="url(#gg)"/>
<circle cx="608.7" cy="226.3" r="2.1" fill="url(#gg)"/>
<circle cx="605.4" cy="211.8" r="2.1" fill="url(#gg)"/>
<circle cx="610.1" cy="260.4" r="2.1" fill="url(#gg)"/>
<circle cx="606.8" cy="245.9" r="2.1" fill="url(#gg)"/>
<circle cx="603.5" cy="231.3" r="2.1" fill="url(#gg)"/>
<circle cx="600.2" cy="216.7" r="2.1" fill="url(#gg)"/>
<circle cx="596.9" cy="202.1" r="2.1" fill="url(#gg)"/>
<circle cx="593.5" cy="187.6" r="2.1" fill="url(#gg)"/>
<circle cx="590.2" cy="173" r="2.1" fill="url(#gg)"/>
<circle cx="619.8" cy="264.2" r="2.1" fill="url(#gg)"/>
<circle cx="616.5" cy="249.7" r="2.1" fill="url(#gg)"/>
<circle cx="613.2" cy="235.1" r="2.1" fill="url(#gg)"/>
<circle cx="609.9" cy="220.5" r="2.1" fill="url(#gg)"/>
<circle cx="606.6" cy="205.9" r="2.1" fill="url(#gg)"/>
<circle cx="603.2" cy="191.4" r="2.1" fill="url(#gg)"/>
<circle cx="599.9" cy="176.8" r="2.1" fill="url(#gg)"/>
<circle cx="629.5" cy="268" r="2.1" fill="url(#gg)"/>
<circle cx="626.2" cy="253.5" r="2.1" fill="url(#gg)"/>
<circle cx="622.9" cy="238.9" r="2.1" fill="url(#gg)"/>
<circle cx="619.6" cy="224.3" r="2.1" fill="url(#gg)"/>
<circle cx="616.3" cy="209.7" r="2.1" fill="url(#gg)"/>
<circle cx="612.9" cy="195.2" r="2.1" fill="url(#gg)"/>
<circle cx="609.6" cy="180.6" r="2.1" fill="url(#gg)"/>
<circle cx="639.2" cy="271.8" r="2.1" fill="url(#gg)"/>
<circle cx="635.9" cy="257.2" r="2.1" fill="url(#gg)"/>
<circle cx="632.6" cy="242.7" r="2.1" fill="url(#gg)"/>
<circle cx="629.3" cy="228.1" r="2.1" fill="url(#gg)"/>
<circle cx="626" cy="213.5" r="2.1" fill="url(#gg)"/>
<circle cx="622.6" cy="199" r="2.1" fill="url(#gg)"/>
<circle cx="619.3" cy="184.4" r="2.1" fill="url(#gg)"/>
<circle cx="648.9" cy="275.6" r="2.1" fill="url(#gg)"/>
<circle cx="645.6" cy="261.1" r="2.1" fill="url(#gg)"/>
<circle cx="642.3" cy="246.5" r="2.1" fill="url(#gg)"/>
<circle cx="639" cy="231.9" r="2.1" fill="url(#gg)"/>
<circle cx="635.7" cy="217.3" r="2.1" fill="url(#gg)"/>
<circle cx="632.3" cy="202.8" r="2.1" fill="url(#gg)"/>
<circle cx="629" cy="188.2" r="2.1" fill="url(#gg)"/>
<circle cx="658.6" cy="279.4" r="2.1" fill="url(#gg)"/>
<circle cx="655.3" cy="264.9" r="2.1" fill="url(#gg)"/>
<circle cx="652" cy="250.3" r="2.1" fill="url(#gg)"/>
<circle cx="648.7" cy="235.7" r="2.1" fill="url(#gg)"/>
<circle cx="645.4" cy="221.1" r="2.1" fill="url(#gg)"/>
<circle cx="642" cy="206.6" r="2.1" fill="url(#gg)"/>
<circle cx="638.7" cy="192" r="2.1" fill="url(#gg)"/>
<circle cx="668.3" cy="283.2" r="2.1" fill="url(#gg)"/>
<circle cx="665" cy="268.7" r="2.1" fill="url(#gg)"/>
<circle cx="661.7" cy="254.1" r="2.1" fill="url(#gg)"/>
<circle cx="658.4" cy="239.5" r="2.1" fill="url(#gg)"/>
<circle cx="655.1" cy="224.9" r="2.1" fill="url(#gg)"/>
<circle cx="651.8" cy="210.4" r="2.1" fill="url(#gg)"/>
<circle cx="648.4" cy="195.8" r="2.1" fill="url(#gg)"/>
<circle cx="653.1" cy="244.4" r="2.1" fill="url(#gg)"/>
<circle cx="649.8" cy="229.9" r="2.1" fill="url(#gg)"/>
<circle cx="646.5" cy="215.3" r="2.1" fill="url(#gg)"/>
<circle cx="643.2" cy="200.7" r="2.1" fill="url(#gg)"/>
<circle cx="639.9" cy="186.2" r="2.1" fill="url(#gg)"/>
<circle cx="636.6" cy="171.6" r="2.1" fill="url(#gg)"/>
<circle cx="633.3" cy="157" r="2.1" fill="url(#gg)"/>
<circle cx="662.9" cy="248.2" r="2.1" fill="url(#gg)"/>
<circle cx="659.5" cy="233.7" r="2.1" fill="url(#gg)"/>
<circle cx="656.2" cy="219.1" r="2.1" fill="url(#gg)"/>
<circle cx="652.9" cy="204.5" r="2.1" fill="url(#gg)"/>
<circle cx="649.6" cy="190" r="2.1" fill="url(#gg)"/>
<circle cx="646.3" cy="175.4" r="2.1" fill="url(#gg)"/>
<circle cx="643" cy="160.8" r="2.1" fill="url(#gg)"/>
<circle cx="672.5" cy="252" r="2.1" fill="url(#gg)"/>
<circle cx="669.2" cy="237.5" r="2.1" fill="url(#gg)"/>
<circle cx="665.9" cy="222.9" r="2.1" fill="url(#gg)"/>
<circle cx="662.6" cy="208.3" r="2.1" fill="url(#gg)"/>
<circle cx="659.3" cy="193.8" r="2.1" fill="url(#gg)"/>
<circle cx="656" cy="179.2" r="2.1" fill="url(#gg)"/>
<circle cx="652.7" cy="164.6" r="2.1" fill="url(#gg)"/>
<circle cx="682.2" cy="255.8" r="2.1" fill="url(#gg)"/>
<circle cx="678.9" cy="241.3" r="2.1" fill="url(#gg)"/>
<circle cx="675.6" cy="226.7" r="2.1" fill="url(#gg)"/>
<circle cx="672.3" cy="212.1" r="2.1" fill="url(#gg)"/>
<circle cx="669" cy="197.6" r="2.1" fill="url(#gg)"/>
<circle cx="665.7" cy="183" r="2.1" fill="url(#gg)"/>
<circle cx="662.4" cy="168.4" r="2.1" fill="url(#gg)"/>
<circle cx="691.9" cy="259.6" r="2.1" fill="url(#gg)"/>
<circle cx="688.6" cy="245.1" r="2.1" fill="url(#gg)"/>
<circle cx="685.3" cy="230.5" r="2.1" fill="url(#gg)"/>
<circle cx="682" cy="215.9" r="2.1" fill="url(#gg)"/>
<circle cx="678.7" cy="201.4" r="2.1" fill="url(#gg)"/>
<circle cx="675.4" cy="186.8" r="2.1" fill="url(#gg)"/>
<circle cx="672.1" cy="172.2" r="2.1" fill="url(#gg)"/>
<circle cx="701.6" cy="263.4" r="2.1" fill="url(#gg)"/>
<circle cx="698.3" cy="248.9" r="2.1" fill="url(#gg)"/>
<circle cx="695" cy="234.3" r="2.1" fill="url(#gg)"/>
<circle cx="691.7" cy="219.7" r="2.1" fill="url(#gg)"/>
<circle cx="688.4" cy="205.2" r="2.1" fill="url(#gg)"/>
<circle cx="685.1" cy="190.6" r="2.1" fill="url(#gg)"/>
<circle cx="681.8" cy="176" r="2.1" fill="url(#gg)"/>
<circle cx="711.4" cy="267.2" r="2.1" fill="url(#gg)"/>
<circle cx="708" cy="252.7" r="2.1" fill="url(#gg)"/>
<circle cx="704.7" cy="238.1" r="2.1" fill="url(#gg)"/>
<circle cx="701.4" cy="223.5" r="2.1" fill="url(#gg)"/>
<circle cx="698.1" cy="209" r="2.1" fill="url(#gg)"/>
<circle cx="694.8" cy="194.4" r="2.1" fill="url(#gg)"/>
<circle cx="691.5" cy="179.8" r="2.1" fill="url(#gg)"/>
<circle cx="696.2" cy="228.5" r="2.1" fill="url(#gg)"/>
<circle cx="692.9" cy="213.9" r="2.1" fill="url(#gg)"/>
<circle cx="689.6" cy="199.3" r="2.1" fill="url(#gg)"/>
<circle cx="686.3" cy="184.8" r="2.1" fill="url(#gg)"/>
<circle cx="683" cy="170.2" r="2.1" fill="url(#gg)"/>
<circle cx="679.6" cy="155.6" r="2.1" fill="url(#gg)"/>
<circle cx="676.3" cy="141.1" r="2.1" fill="url(#gg)"/>
<circle cx="705.9" cy="232.3" r="2.1" fill="url(#gg)"/>
<circle cx="702.6" cy="217.7" r="2.1" fill="url(#gg)"/>
<circle cx="699.3" cy="203.1" r="2.1" fill="url(#gg)"/>
<circle cx="696" cy="188.6" r="2.1" fill="url(#gg)"/>
<circle cx="692.7" cy="174" r="2.1" fill="url(#gg)"/>
<circle cx="689.4" cy="159.4" r="2.1" fill="url(#gg)"/>
<circle cx="686" cy="144.9" r="2.1" fill="url(#gg)"/>
<circle cx="715.6" cy="236.1" r="2.1" fill="url(#gg)"/>
<circle cx="712.3" cy="221.5" r="2.1" fill="url(#gg)"/>
<circle cx="709" cy="206.9" r="2.1" fill="url(#gg)"/>
<circle cx="705.7" cy="192.4" r="2.05" fill="url(#gt)"/>
<circle cx="702.4" cy="177.8" r="2.05" fill="url(#gt)"/>
<circle cx="699" cy="163.2" r="2.05" fill="url(#gt)"/>
<circle cx="695.7" cy="148.7" r="2.05" fill="url(#gt)"/>
<circle cx="725.3" cy="239.9" r="2.1" fill="url(#gg)"/>
<circle cx="722" cy="225.3" r="2.1" fill="url(#gg)"/>
<circle cx="718.7" cy="210.7" r="2.1" fill="url(#gg)"/>
<circle cx="715.4" cy="196.2" r="2.05" fill="url(#gt)"/>
<circle cx="712.1" cy="181.6" r="2.05" fill="url(#gt)"/>
<circle cx="708.8" cy="167" r="2.05" fill="url(#gt)"/>
<circle cx="705.4" cy="152.5" r="2.05" fill="url(#gt)"/>
<circle cx="735" cy="243.7" r="2.1" fill="url(#gg)"/>
<circle cx="731.7" cy="229.1" r="2.1" fill="url(#gg)"/>
<circle cx="728.4" cy="214.5" r="2.1" fill="url(#gg)"/>
<circle cx="725.1" cy="200" r="2.05" fill="url(#gt)"/>
<circle cx="721.8" cy="185.4" r="2.05" fill="url(#gt)"/>
<circle cx="718.4" cy="170.8" r="2.05" fill="url(#gt)"/>
<circle cx="715.1" cy="156.3" r="2.05" fill="url(#gt)"/>
<circle cx="744.7" cy="247.5" r="2.1" fill="url(#gg)"/>
<circle cx="741.4" cy="232.9" r="2.1" fill="url(#gg)"/>
<circle cx="738.1" cy="218.3" r="2.1" fill="url(#gg)"/>
<circle cx="734.8" cy="203.8" r="2.05" fill="url(#gt)"/>
<circle cx="731.5" cy="189.2" r="2.05" fill="url(#gt)"/>
<circle cx="728.1" cy="174.6" r="2.05" fill="url(#gt)"/>
<circle cx="724.8" cy="160.1" r="2.05" fill="url(#gt)"/>
<circle cx="754.4" cy="251.3" r="2.1" fill="url(#gg)"/>
<circle cx="751.1" cy="236.7" r="2.1" fill="url(#gg)"/>
<circle cx="747.8" cy="222.1" r="2.1" fill="url(#gg)"/>
<circle cx="744.5" cy="207.6" r="2.05" fill="url(#gt)"/>
<circle cx="741.2" cy="193" r="2.05" fill="url(#gt)"/>
<circle cx="737.9" cy="178.4" r="2.05" fill="url(#gt)"/>
<circle cx="734.5" cy="163.9" r="2.05" fill="url(#gt)"/></g>
<!-- car -->
<path d="M452.3 278C452.9 276.6 453.2 277.4 455 276.3C456.8 275.2 459.4 273.6 463 271.5C466.6 269.4 471.2 267 476.5 263.9C481.8 260.8 488.9 256.3 494.7 253C500.4 249.7 507.2 246.7 511 244.2C514.8 241.7 515.9 240.4 517.5 238C519.1 235.6 519.5 232 520.5 230C521.5 228 521.7 227.9 523.5 226C525.3 224.1 528.1 221.4 531.2 218.3C534.3 215.2 537.6 210.9 542.2 207.4C546.8 203.9 552.8 200.3 558.6 197.3C564.4 194.3 571.7 191.8 576.9 189.6C582.1 187.4 584.8 186.3 590 184.4C595.2 182.5 601.5 179.9 608.2 178.4C614.9 176.9 622.5 175.8 630.1 175.3C637.7 174.8 646 175.4 653.9 175.6C661.8 175.8 670 176.2 677.6 176.6C685.2 177 694 177.1 699.5 177.8C705 178.5 707.6 179 710.4 180.6C713.2 182.2 714.8 184.8 716.4 187.4C718 190.1 718.7 192.8 720.2 196.5C721.7 200.2 723.7 205.4 725.3 209.3C726.9 213.2 728.8 216.9 729.8 220.2C730.8 223.5 731.7 226.8 731.3 229.3C730.9 231.8 729.7 233.4 727.6 235.2C725.5 237 720.9 238.4 718.5 240C716.1 241.6 714.6 241.5 713 244.5C711.4 247.5 712.8 255.1 709 258C705.2 260.9 695.9 261.6 690 262C684.1 262.4 681.8 258.7 673.5 260.6C665.2 262.5 652.2 268.7 640 273.4C627.8 278.1 614.6 283.1 600 288.7C585.4 294.3 563.1 302.1 552.3 307C541.5 311.9 541.7 315.6 535 318C528.3 320.4 517.3 320.3 512.2 321.4C507.1 322.5 508.7 323.6 504.2 324.6C499.7 325.6 490.4 327.2 485 327.3C479.6 327.4 475.8 326.2 472 325.2C468.2 324.2 465.4 322.9 462.5 321.2C459.6 319.5 456.4 317 454.6 314.8C452.8 312.6 452.1 311.1 451.5 308C450.9 304.9 451.1 299.8 451.1 296C451.1 292.2 451.1 288 451.3 285C451.5 282 451.7 279.4 452.3 278Z" fill="url(#gside)"/>
<path d="M452.3 278C452.7 276.6 453.2 277.4 455 276.3C456.8 275.2 459.4 273.6 463 271.5C466.6 269.4 471.2 267 476.5 263.9C481.8 260.8 488.9 256.3 494.7 253C500.4 249.7 507.2 246.7 511 244.2C514.8 241.7 515.9 240.4 517.5 238C519.1 235.6 519.5 232 520.5 230C521.5 228 521.7 227.9 523.5 226C525.3 224.1 528.1 221.4 531.2 218.3C534.3 215.2 537.6 210.9 542.2 207.4C546.8 203.9 552.8 200.3 558.6 197.3C564.4 194.3 571.7 191.8 576.9 189.6C582.1 187.4 584.8 186.3 590 184.4C595.2 182.5 601.5 179.9 608.2 178.4C614.9 176.9 622.5 175.8 630.1 175.3C637.7 174.8 646 175.4 653.9 175.6C661.8 175.8 670 176.2 677.6 176.6C685.2 177 694 177.1 699.5 177.8C705 178.5 709.2 179.8 710.4 180.6C711.6 181.4 710.8 181.6 706.8 182.4C702.8 183.2 694.3 184.4 686.3 185.5C678.3 186.6 667.2 188.3 659 189C650.8 189.7 644.8 188.1 636.8 189.8C628.8 191.5 618.3 195.5 611 199C603.7 202.5 598.1 206.6 593 211C587.9 215.4 583.2 220.3 580.2 225.6C577.2 230.9 576.8 239.2 574.7 243C572.6 246.8 570.7 246.2 567.7 248.2C564.7 250.1 561 252.2 556.8 254.7C552.5 257.1 546.7 261 542.2 262.9C537.7 264.8 534.3 265.1 530 266.2C525.7 267.3 521.6 268.2 516.6 269.3C511.6 270.4 505.2 271.5 500 272.6C494.8 273.7 490.6 274.6 485.6 275.7C480.6 276.8 475.5 278 470 279.5C464.5 281 455.8 284.8 452.8 284.5C449.9 284.2 451.9 279.4 452.3 278Z" fill="url(#gtop)"/>
<g clip-path="url(#cb)"><path d="M452 287 C470 282 500 275 520 271 L556 256 C548 272 530 280 512 286 C490 293 468 296 452 297Z" fill="#8a9597" opacity="0.4"/><path d="M453 303 C470 310 492 312 510 306 L512 322 L485 328 L462 322Z" fill="#5f696b" opacity="0.7"/><path d="M492 300 C499 296 509 296 513 300 C511 309 503 313 494 311Z" fill="#9aa5a7" opacity="0.4"/><path d="M451 284 L456 283 L457 312 L452 309Z" fill="#5c6567" opacity="0.7"/><path d="M572 246.5 l5 -3.2 l2.6 1.4 l-3.6 3.4z" fill="#3f4648"/><circle cx="579.5" cy="247.4" r="1.5" fill="#b4bdbe"/><path d="M611 255.5 l6 -2 l1 1 l-6 2.2z" fill="#465052"/><circle cx="608.6" cy="257.3" r="1.1" fill="#b4bdbe"/><path d="M556 306 L673 261 L674 258 L556 303Z" fill="#586163" opacity="0.8"/><path d="M716 188 C722 205 729 220 731 229 L727 235 L713 244 C716 225 712 205 704 190Z" fill="#687274" opacity="0.7"/></g>
<path d="M511 314 C509 296.5 520 285.5 535.5 286.5 C547.5 287.3 555 296.5 555.6 305.5 L552 307.5 L535 317 Z" fill="#5a6466"/><path d="M672.6 257.5 C670 240 680.5 226 695.5 226.6 C707.5 227.2 715 235.5 715.6 243.5 L709 257 L690 261 Z" fill="#5a6466"/>
<g transform="translate(531.6 309.2) rotate(-8)"><ellipse rx="19.0" ry="19.3" fill="#7c8789" stroke="#98a2a4" stroke-width="0.9"/><ellipse cx="0.8" rx="14.6" ry="15.3" fill="#868f91" stroke="#9ca5a7" stroke-width="0.8"/><ellipse cx="1.4" rx="12.0" ry="12.9" fill="#626b6d"/><line x1="1.4" y1="0" x2="12.4" y2="4.3" stroke="#8e9899" stroke-width="2.6" stroke-linecap="round"/><line x1="1.4" y1="0" x2="1" y2="12.5" stroke="#8e9899" stroke-width="2.6" stroke-linecap="round"/><line x1="1.4" y1="0" x2="-9.8" y2="3.4" stroke="#8e9899" stroke-width="2.6" stroke-linecap="round"/><line x1="1.4" y1="0" x2="-5.1" y2="-10.4" stroke="#8e9899" stroke-width="2.6" stroke-linecap="round"/><line x1="1.4" y1="0" x2="8.6" y2="-9.9" stroke="#8e9899" stroke-width="2.6" stroke-linecap="round"/><ellipse cx="1.4" rx="2.4" ry="2.4" fill="#9aa3a5"/><ellipse cx="4.2" cy="3.4" rx="1.7" ry="2.2" fill="#3d4446"/></g><g transform="translate(692.8 248.4) rotate(-8)"><ellipse rx="18.7" ry="19.0" fill="#7c8789" stroke="#98a2a4" stroke-width="0.9"/><ellipse cx="0.8" rx="14.299999999999999" ry="15.0" fill="#868f91" stroke="#9ca5a7" stroke-width="0.8"/><ellipse cx="1.4" rx="11.7" ry="12.6" fill="#626b6d"/><line x1="1.4" y1="0" x2="12.1" y2="4.2" stroke="#8e9899" stroke-width="2.6" stroke-linecap="round"/><line x1="1.4" y1="0" x2="1" y2="12.2" stroke="#8e9899" stroke-width="2.6" stroke-linecap="round"/><line x1="1.4" y1="0" x2="-9.6" y2="3.4" stroke="#8e9899" stroke-width="2.6" stroke-linecap="round"/><line x1="1.4" y1="0" x2="-5" y2="-10.1" stroke="#8e9899" stroke-width="2.6" stroke-linecap="round"/><line x1="1.4" y1="0" x2="8.4" y2="-9.6" stroke="#8e9899" stroke-width="2.6" stroke-linecap="round"/><ellipse cx="1.4" rx="2.4" ry="2.4" fill="#9aa3a5"/><ellipse cx="4.2" cy="3.4" rx="1.7" ry="2.2" fill="#3d4446"/></g>
<g clip-path="url(#cb)">
<g stroke="#4a5151" stroke-width="2.4" fill="none" opacity="0.46">
<line x1="429.4" y1="387.8" x2="756.6" y2="266.4"/>
<line x1="429.4" y1="380.4" x2="756.6" y2="259.1"/>
<line x1="429.4" y1="373.1" x2="756.6" y2="251.7"/>
<line x1="429.4" y1="365.7" x2="756.6" y2="244.4"/>
<line x1="429.4" y1="358.4" x2="756.6" y2="237"/>
<line x1="429.4" y1="351" x2="756.6" y2="229.7"/>
<line x1="429.4" y1="343.7" x2="756.6" y2="222.3"/>
<line x1="429.4" y1="336.3" x2="756.6" y2="215"/>
<line x1="429.4" y1="329" x2="756.6" y2="207.6"/>
<line x1="429.4" y1="321.6" x2="756.6" y2="200.3"/>
<line x1="429.4" y1="314.3" x2="756.6" y2="192.9"/>
<line x1="429.4" y1="306.9" x2="756.6" y2="185.6"/>
<line x1="429.4" y1="299.6" x2="756.6" y2="178.2"/>
<line x1="429.4" y1="292.2" x2="756.6" y2="170.9"/>
<line x1="429.4" y1="284.9" x2="756.6" y2="163.5"/>
<line x1="429.4" y1="277.5" x2="756.6" y2="156.2"/>
<line x1="429.4" y1="270.2" x2="756.6" y2="148.8"/>
<line x1="429.4" y1="262.8" x2="756.6" y2="141.5"/>
<line x1="429.4" y1="255.5" x2="756.6" y2="134.1"/>
<line x1="429.4" y1="248.1" x2="756.6" y2="126.8"/>
<line x1="429.4" y1="240.8" x2="756.6" y2="119.4"/>
<line x1="429.4" y1="233.4" x2="756.6" y2="112.1"/>
<line x1="429.4" y1="226.1" x2="756.6" y2="104.7"/>
<line x1="429.4" y1="218.7" x2="756.6" y2="97.4"/>
</g>
<g stroke="#939b9b" stroke-width="2" fill="none" opacity="0.4" clip-path="url(#ct)">
<line x1="429.4" y1="384.1" x2="756.6" y2="262.7"/>
<line x1="429.4" y1="376.7" x2="756.6" y2="255.4"/>
<line x1="429.4" y1="369.4" x2="756.6" y2="248"/>
<line x1="429.4" y1="362" x2="756.6" y2="240.7"/>
<line x1="429.4" y1="354.7" x2="756.6" y2="233.3"/>
<line x1="429.4" y1="347.3" x2="756.6" y2="226"/>
<line x1="429.4" y1="340" x2="756.6" y2="218.6"/>
<line x1="429.4" y1="332.6" x2="756.6" y2="211.3"/>
<line x1="429.4" y1="325.3" x2="756.6" y2="203.9"/>
<line x1="429.4" y1="317.9" x2="756.6" y2="196.6"/>
<line x1="429.4" y1="310.6" x2="756.6" y2="189.2"/>
<line x1="429.4" y1="303.2" x2="756.6" y2="181.9"/>
<line x1="429.4" y1="295.9" x2="756.6" y2="174.5"/>
<line x1="429.4" y1="288.5" x2="756.6" y2="167.2"/>
<line x1="429.4" y1="281.2" x2="756.6" y2="159.8"/>
<line x1="429.4" y1="273.8" x2="756.6" y2="152.5"/>
<line x1="429.4" y1="266.5" x2="756.6" y2="145.1"/>
<line x1="429.4" y1="259.1" x2="756.6" y2="137.8"/>
<line x1="429.4" y1="251.8" x2="756.6" y2="130.4"/>
<line x1="429.4" y1="244.4" x2="756.6" y2="123.1"/>
<line x1="429.4" y1="237.1" x2="756.6" y2="115.7"/>
<line x1="429.4" y1="229.7" x2="756.6" y2="108.4"/>
<line x1="429.4" y1="222.4" x2="756.6" y2="101"/>
<line x1="429.4" y1="215" x2="756.6" y2="93.7"/>
</g>
<g stroke="#cfd6d6" stroke-width="0.8" fill="none" opacity="0.08">
<line x1="437.9" y1="324.3" x2="496.1" y2="347.1"/>
<line x1="434.6" y1="309.7" x2="492.8" y2="332.5"/>
<line x1="431.3" y1="295.2" x2="489.5" y2="318"/>
<line x1="428" y1="280.6" x2="486.2" y2="303.4"/>
<line x1="424.7" y1="266" x2="482.9" y2="288.8"/>
<line x1="421.3" y1="251.5" x2="479.5" y2="274.2"/>
<line x1="418" y1="236.9" x2="476.2" y2="259.7"/>
<line x1="437.9" y1="324.3" x2="418" y2="236.9"/>
<line x1="447.6" y1="328.1" x2="427.7" y2="240.7"/>
<line x1="457.3" y1="331.9" x2="437.4" y2="244.5"/>
<line x1="467" y1="335.7" x2="447.1" y2="248.3"/>
<line x1="476.7" y1="339.5" x2="456.8" y2="252.1"/>
<line x1="486.4" y1="343.3" x2="466.5" y2="255.9"/>
<line x1="496.1" y1="347.1" x2="476.2" y2="259.7"/>
<line x1="480.9" y1="308.3" x2="539.1" y2="331.1"/>
<line x1="477.6" y1="293.8" x2="535.8" y2="316.6"/>
<line x1="474.3" y1="279.2" x2="532.5" y2="302"/>
<line x1="471" y1="264.6" x2="529.2" y2="287.4"/>
<line x1="467.7" y1="250" x2="525.9" y2="272.9"/>
<line x1="464.4" y1="235.5" x2="522.6" y2="258.3"/>
<line x1="461.1" y1="220.9" x2="519.3" y2="243.7"/>
<line x1="480.9" y1="308.3" x2="461.1" y2="220.9"/>
<line x1="490.6" y1="312.1" x2="470.8" y2="224.7"/>
<line x1="500.3" y1="315.9" x2="480.5" y2="228.5"/>
<line x1="510.1" y1="319.7" x2="490.2" y2="232.3"/>
<line x1="519.8" y1="323.5" x2="499.9" y2="236.1"/>
<line x1="529.5" y1="327.3" x2="509.6" y2="239.9"/>
<line x1="539.1" y1="331.1" x2="519.3" y2="243.7"/>
<line x1="524" y1="292.4" x2="582.2" y2="315.2"/>
<line x1="520.7" y1="277.8" x2="578.9" y2="300.6"/>
<line x1="517.4" y1="263.2" x2="575.6" y2="286"/>
<line x1="514.1" y1="248.7" x2="572.3" y2="271.5"/>
<line x1="510.8" y1="234.1" x2="569" y2="256.9"/>
<line x1="507.4" y1="219.5" x2="565.7" y2="242.3"/>
<line x1="504.1" y1="204.9" x2="562.3" y2="227.7"/>
<line x1="524" y1="292.4" x2="504.1" y2="204.9"/>
<line x1="533.7" y1="296.2" x2="513.8" y2="208.7"/>
<line x1="543.4" y1="300" x2="523.5" y2="212.5"/>
<line x1="553.1" y1="303.8" x2="533.2" y2="216.3"/>
<line x1="562.8" y1="307.6" x2="542.9" y2="220.1"/>
<line x1="572.5" y1="311.4" x2="552.6" y2="223.9"/>
<line x1="582.2" y1="315.2" x2="562.3" y2="227.7"/>
<line x1="567" y1="276.4" x2="625.2" y2="299.2"/>
<line x1="563.7" y1="261.8" x2="621.9" y2="284.6"/>
<line x1="560.4" y1="247.2" x2="618.6" y2="270.1"/>
<line x1="557.1" y1="232.7" x2="615.3" y2="255.5"/>
<line x1="553.8" y1="218.1" x2="612" y2="240.9"/>
<line x1="550.5" y1="203.5" x2="608.7" y2="226.3"/>
<line x1="547.2" y1="189" x2="605.4" y2="211.8"/>
<line x1="567" y1="276.4" x2="547.2" y2="189"/>
<line x1="576.8" y1="280.2" x2="556.9" y2="192.8"/>
<line x1="586.4" y1="284" x2="566.6" y2="196.6"/>
<line x1="596.1" y1="287.8" x2="576.3" y2="200.4"/>
<line x1="605.8" y1="291.6" x2="586" y2="204.2"/>
<line x1="615.5" y1="295.4" x2="595.7" y2="208"/>
<line x1="625.2" y1="299.2" x2="605.4" y2="211.8"/>
<line x1="610.1" y1="260.4" x2="668.3" y2="283.2"/>
<line x1="606.8" y1="245.9" x2="665" y2="268.7"/>
<line x1="603.5" y1="231.3" x2="661.7" y2="254.1"/>
<line x1="600.2" y1="216.7" x2="658.4" y2="239.5"/>
<line x1="596.9" y1="202.1" x2="655.1" y2="224.9"/>
<line x1="593.5" y1="187.6" x2="651.8" y2="210.4"/>
<line x1="590.2" y1="173" x2="648.4" y2="195.8"/>
<line x1="610.1" y1="260.4" x2="590.2" y2="173"/>
<line x1="619.8" y1="264.2" x2="599.9" y2="176.8"/>
<line x1="629.5" y1="268" x2="609.6" y2="180.6"/>
<line x1="639.2" y1="271.8" x2="619.3" y2="184.4"/>
<line x1="648.9" y1="275.6" x2="629" y2="188.2"/>
<line x1="658.6" y1="279.4" x2="638.7" y2="192"/>
<line x1="668.3" y1="283.2" x2="648.4" y2="195.8"/>
<line x1="653.1" y1="244.4" x2="711.4" y2="267.2"/>
<line x1="649.8" y1="229.9" x2="708" y2="252.7"/>
<line x1="646.5" y1="215.3" x2="704.7" y2="238.1"/>
<line x1="643.2" y1="200.7" x2="701.4" y2="223.5"/>
<line x1="639.9" y1="186.2" x2="698.1" y2="209"/>
<line x1="636.6" y1="171.6" x2="694.8" y2="194.4"/>
<line x1="633.3" y1="157" x2="691.5" y2="179.8"/>
<line x1="653.1" y1="244.4" x2="633.3" y2="157"/>
<line x1="662.9" y1="248.2" x2="643" y2="160.8"/>
<line x1="672.5" y1="252" x2="652.7" y2="164.6"/>
<line x1="682.2" y1="255.8" x2="662.4" y2="168.4"/>
<line x1="691.9" y1="259.6" x2="672.1" y2="172.2"/>
<line x1="701.6" y1="263.4" x2="681.8" y2="176"/>
<line x1="711.4" y1="267.2" x2="691.5" y2="179.8"/>
<line x1="696.2" y1="228.5" x2="754.4" y2="251.3"/>
<line x1="692.9" y1="213.9" x2="751.1" y2="236.7"/>
<line x1="689.6" y1="199.3" x2="747.8" y2="222.1"/>
<line x1="686.3" y1="184.8" x2="744.5" y2="207.6"/>
<line x1="683" y1="170.2" x2="741.2" y2="193"/>
<line x1="679.6" y1="155.6" x2="737.9" y2="178.4"/>
<line x1="676.3" y1="141.1" x2="734.5" y2="163.9"/>
<line x1="696.2" y1="228.5" x2="676.3" y2="141.1"/>
<line x1="705.9" y1="232.3" x2="686" y2="144.9"/>
<line x1="715.6" y1="236.1" x2="695.7" y2="148.7"/>
<line x1="725.3" y1="239.9" x2="705.4" y2="152.5"/>
<line x1="735" y1="243.7" x2="715.1" y2="156.3"/>
<line x1="744.7" y1="247.5" x2="724.8" y2="160.1"/>
<line x1="754.4" y1="251.3" x2="734.5" y2="163.9"/>
</g>
</g>
<g clip-path="url(#cb)" fill="#b4bcbc" opacity="0.45"><circle cx="428" cy="280.6" r="1.7"/>
<circle cx="424.7" cy="266" r="1.7"/>
<circle cx="421.3" cy="251.5" r="1.7"/>
<circle cx="418" cy="236.9" r="1.7"/>
<circle cx="434.4" cy="269.8" r="1.7"/>
<circle cx="431" cy="255.3" r="1.7"/>
<circle cx="427.7" cy="240.7" r="1.7"/>
<circle cx="444.1" cy="273.6" r="1.7"/>
<circle cx="440.7" cy="259.1" r="1.7"/>
<circle cx="437.4" cy="244.5" r="1.7"/>
<circle cx="450.4" cy="262.9" r="1.7"/>
<circle cx="447.1" cy="248.3" r="1.7"/>
<circle cx="460.1" cy="266.6" r="1.7"/>
<circle cx="456.8" cy="252.1" r="1.7"/>
<circle cx="469.8" cy="270.5" r="1.7"/>
<circle cx="466.5" cy="255.9" r="1.7"/>
<circle cx="476.2" cy="259.7" r="1.7"/>
<circle cx="467.7" cy="250" r="1.7"/>
<circle cx="464.4" cy="235.5" r="1.7"/>
<circle cx="461.1" cy="220.9" r="1.7"/>
<circle cx="477.4" cy="253.8" r="1.7"/>
<circle cx="474.1" cy="239.3" r="1.7"/>
<circle cx="470.8" cy="224.7" r="1.7"/>
<circle cx="487.1" cy="257.6" r="1.7"/>
<circle cx="483.8" cy="243.1" r="1.7"/>
<circle cx="480.5" cy="228.5" r="1.7"/>
<circle cx="496.8" cy="261.4" r="1.7"/>
<circle cx="493.5" cy="246.9" r="1.7"/>
<circle cx="490.2" cy="232.3" r="1.7"/>
<circle cx="506.5" cy="265.2" r="1.7"/>
<circle cx="503.2" cy="250.7" r="1.7"/>
<circle cx="499.9" cy="236.1" r="1.7"/>
<circle cx="516.2" cy="269" r="1.7"/>
<circle cx="512.9" cy="254.5" r="1.7"/>
<circle cx="509.6" cy="239.9" r="1.7"/>
<circle cx="539.1" cy="331.1" r="1.7"/>
<circle cx="535.8" cy="316.6" r="1.7"/>
<circle cx="532.5" cy="302" r="1.7"/>
<circle cx="529.2" cy="287.4" r="1.7"/>
<circle cx="525.9" cy="272.9" r="1.7"/>
<circle cx="522.6" cy="258.3" r="1.7"/>
<circle cx="519.3" cy="243.7" r="1.7"/>
<circle cx="507.4" cy="219.5" r="1.7"/>
<circle cx="504.1" cy="204.9" r="1.7"/>
<circle cx="517.2" cy="223.3" r="1.7"/>
<circle cx="513.8" cy="208.7" r="1.7"/>
<circle cx="526.9" cy="227.1" r="1.7"/>
<circle cx="523.5" cy="212.5" r="1.7"/>
<circle cx="536.6" cy="230.9" r="1.7"/>
<circle cx="533.2" cy="216.3" r="1.7"/>
<circle cx="546.2" cy="234.7" r="1.7"/>
<circle cx="542.9" cy="220.1" r="1.7"/>
<circle cx="556" cy="238.5" r="1.7"/>
<circle cx="552.6" cy="223.9" r="1.7"/>
<circle cx="582.2" cy="315.2" r="1.7"/>
<circle cx="578.9" cy="300.6" r="1.7"/>
<circle cx="575.6" cy="286" r="1.7"/>
<circle cx="572.3" cy="271.5" r="1.7"/>
<circle cx="569" cy="256.9" r="1.7"/>
<circle cx="565.7" cy="242.3" r="1.7"/>
<circle cx="562.3" cy="227.7" r="1.7"/>
<circle cx="547.2" cy="189" r="1.7"/>
<circle cx="556.9" cy="192.8" r="1.7"/>
<circle cx="566.6" cy="196.6" r="1.7"/>
<circle cx="576.3" cy="200.4" r="1.7"/>
<circle cx="586" cy="204.2" r="1.7"/>
<circle cx="595.7" cy="208" r="1.7"/>
<circle cx="625.2" cy="299.2" r="1.7"/>
<circle cx="621.9" cy="284.6" r="1.7"/>
<circle cx="618.6" cy="270.1" r="1.7"/>
<circle cx="615.3" cy="255.5" r="1.7"/>
<circle cx="612" cy="240.9" r="1.7"/>
<circle cx="608.7" cy="226.3" r="1.7"/>
<circle cx="605.4" cy="211.8" r="1.7"/>
<circle cx="590.2" cy="173" r="1.7"/>
<circle cx="599.9" cy="176.8" r="1.7"/>
<circle cx="609.6" cy="180.6" r="1.7"/>
<circle cx="619.3" cy="184.4" r="1.7"/>
<circle cx="629" cy="188.2" r="1.7"/>
<circle cx="638.7" cy="192" r="1.7"/>
<circle cx="668.3" cy="283.2" r="1.7"/>
<circle cx="665" cy="268.7" r="1.7"/>
<circle cx="661.7" cy="254.1" r="1.7"/>
<circle cx="658.4" cy="239.5" r="1.7"/>
<circle cx="655.1" cy="224.9" r="1.7"/>
<circle cx="651.8" cy="210.4" r="1.7"/>
<circle cx="648.4" cy="195.8" r="1.7"/>
<circle cx="633.3" cy="157" r="1.7"/>
<circle cx="643" cy="160.8" r="1.7"/>
<circle cx="652.7" cy="164.6" r="1.7"/>
<circle cx="662.4" cy="168.4" r="1.7"/>
<circle cx="672.1" cy="172.2" r="1.7"/>
<circle cx="681.8" cy="176" r="1.7"/>
<circle cx="711.4" cy="267.2" r="1.7"/>
<circle cx="708" cy="252.7" r="1.7"/>
<circle cx="704.7" cy="238.1" r="1.7"/>
<circle cx="701.4" cy="223.5" r="1.7"/>
<circle cx="698.1" cy="209" r="1.7"/>
<circle cx="694.8" cy="194.4" r="1.7"/>
<circle cx="691.5" cy="179.8" r="1.7"/>
<circle cx="676.3" cy="141.1" r="1.7"/>
<circle cx="686" cy="144.9" r="1.7"/>
<circle cx="754.4" cy="251.3" r="1.7"/>
<circle cx="751.1" cy="236.7" r="1.7"/>
<circle cx="747.8" cy="222.1" r="1.7"/></g>
<g><circle cx="437.9" cy="324.3" r="2.0" fill="url(#gb)"/>
<circle cx="434.6" cy="309.7" r="2.0" fill="url(#gb)"/>
<circle cx="431.3" cy="295.2" r="2.0" fill="url(#gb)"/>
<circle cx="447.6" cy="328.1" r="2.0" fill="url(#gb)"/>
<circle cx="444.3" cy="313.5" r="2.0" fill="url(#gb)"/>
<circle cx="441" cy="299" r="2.0" fill="url(#gb)"/>
<circle cx="437.7" cy="284.4" r="2.0" fill="url(#gb)"/>
<circle cx="457.3" cy="331.9" r="2.0" fill="url(#gb)"/>
<circle cx="454" cy="317.3" r="2.0" fill="url(#gb)"/>
<circle cx="450.7" cy="302.8" r="2.0" fill="url(#gb)"/>
<circle cx="447.4" cy="288.2" r="2.0" fill="url(#gb)"/>
<circle cx="467" cy="335.7" r="2.0" fill="url(#gb)"/>
<circle cx="463.7" cy="321.1" r="2.0" fill="url(#gb)"/>
<circle cx="460.4" cy="306.6" r="2.0" fill="url(#gb)"/>
<circle cx="457.1" cy="292" r="2.0" fill="url(#gb)"/>
<circle cx="453.8" cy="277.4" r="2.0" fill="url(#gb)"/>
<circle cx="476.7" cy="339.5" r="2.0" fill="url(#gb)"/>
<circle cx="473.4" cy="324.9" r="2.0" fill="url(#gb)"/>
<circle cx="470.1" cy="310.4" r="2.0" fill="url(#gb)"/>
<circle cx="466.8" cy="295.8" r="2.0" fill="url(#gb)"/>
<circle cx="463.5" cy="281.2" r="2.0" fill="url(#gb)"/>
<circle cx="486.4" cy="343.3" r="2.0" fill="url(#gb)"/>
<circle cx="483.1" cy="328.7" r="2.0" fill="url(#gb)"/>
<circle cx="479.8" cy="314.2" r="2.0" fill="url(#gb)"/>
<circle cx="476.5" cy="299.6" r="2.0" fill="url(#gb)"/>
<circle cx="473.2" cy="285" r="2.0" fill="url(#gb)"/>
<circle cx="496.1" cy="347.1" r="2.0" fill="url(#gb)"/>
<circle cx="492.8" cy="332.5" r="2.0" fill="url(#gb)"/>
<circle cx="489.5" cy="318" r="2.0" fill="url(#gb)"/>
<circle cx="486.2" cy="303.4" r="2.0" fill="url(#gb)"/>
<circle cx="482.9" cy="288.8" r="2.0" fill="url(#gb)"/>
<circle cx="479.5" cy="274.2" r="2.0" fill="url(#gb)"/></g>
</g>
<!-- toolbar -->
<rect x="187" y="102.5" width="530" height="28.5" fill="#fff"/>
<path d="M376.1 112.8 l4 -1.6 l4 1.6 v6 l-4 1.6 l-4 -1.6z" fill="#fff" stroke="#3a3a3a" stroke-width="1"/><path d="M376.1 112.8 l4 1.6 v6 l-4 -1.6z" fill="#3a3a3a"/><path d="M372.1 120.5 q7 5 15 0" fill="none" stroke="#3a3a3a" stroke-width="1.1"/>
<g stroke="#3a3a3a" stroke-width="1.2" fill="none"><path d="M403.5 111 V118.5 L397 122 M403.5 118.5 L409 122"/></g><path d="M398 114.4 l4.2 -1.8 v5.2 l-4.2 1.8z" fill="#3a3a3a"/>
<g stroke="#3a3a3a" stroke-width="1.2" fill="none"><path d="M425.8 110 V118 L419.3 121.5 M425.8 118 L432.3 121.5"/></g><path d="M422.8 120.8 l3 -1.6 l3 1.6 l-3 1.6z" fill="#3a3a3a"/>
<g stroke="#3a3a3a" stroke-width="1.1" fill="none"><line x1="445.6" y1="111" x2="445.6" y2="122.5"/><line x1="449" y1="111" x2="449" y2="122.5"/><line x1="452.4" y1="111" x2="452.4" y2="122.5"/><line x1="443" y1="114" x2="454.5" y2="114"/><line x1="443" y1="117" x2="454.5" y2="117"/><line x1="443" y1="120" x2="454.5" y2="120"/></g><ellipse cx="453" cy="121" rx="2.6" ry="1.8" fill="#3a3a3a"/>
<path d="M468.2 112.8 l4 -1.6 l4 1.6 v6 l-4 1.6 l-4 -1.6z" fill="#fff" stroke="#3a3a3a" stroke-width="1"/><path d="M468.2 112.8 l4 1.6 v6 l-4 -1.6z" fill="#3a3a3a"/><path d="M464.2 120.5 q7 5 15 0" fill="none" stroke="#3a3a3a" stroke-width="1.1"/>
<g stroke="#3a3a3a" stroke-width="1.3" fill="none"><path d="M489.6 117 H499.6 M494.6 112 V122"/></g><path d="M488.1 117 L490.7 114.8 L490.7 119.2Z" fill="#3a3a3a"/><path d="M501.1 117 L498.5 119.2 L498.5 114.8Z" fill="#3a3a3a"/><path d="M494.6 110.5 L496.8 113.1 L492.4 113.1Z" fill="#3a3a3a"/><path d="M494.6 123.5 L492.4 120.9 L496.8 120.9Z" fill="#3a3a3a"/>
<rect x="512.2" y="111.5" width="11.4" height="11" fill="#fff" stroke="#3a3a3a" stroke-width="1.2"/><path d="M516.7 115.8 l-2.8 0 l2.8 -2.8 z" fill="#3a3a3a"/><path d="M519.1 115.8 l2.8 0 l-2.8 -2.8 z" fill="#3a3a3a"/><path d="M516.7 118.2 l-2.8 0 l2.8 2.8 z" fill="#3a3a3a"/><path d="M519.1 118.2 l2.8 0 l-2.8 2.8 z" fill="#3a3a3a"/>
<path d="M535.4 111.5 H546.4 V122.5" fill="none" stroke="#3a3a3a" stroke-width="1.2"/><rect x="535.4" y="117.3" width="5.2" height="5.2" fill="#fff" stroke="#3a3a3a" stroke-width="1.1"/><path d="M541.1 116.2 l3 -3 m-2.4 0 h2.4 v2.4" fill="none" stroke="#3a3a3a" stroke-width="0.9"/>
<line x1="558.4" y1="110.8" x2="558.4" y2="121.8" stroke="#3f78e0" stroke-width="1.2"/><line x1="558.4" y1="121.8" x2="569.9" y2="121.8" stroke="#3fc23f" stroke-width="1.2"/><text x="565.7" y="118.2" font-size="6.6" font-weight="bold" fill="#e03a3a" text-anchor="middle" font-family="Liberation Sans, sans-serif">X+</text>
<line x1="592.3" y1="110.8" x2="592.3" y2="121.8" stroke="#3f78e0" stroke-width="1.2"/><line x1="592.3" y1="121.8" x2="580.8" y2="121.8" stroke="#3fc23f" stroke-width="1.2"/><text x="585" y="118.2" font-size="6.6" font-weight="bold" fill="#e03a3a" text-anchor="middle" font-family="Liberation Sans, sans-serif">X-</text>
<line x1="615.3" y1="110.8" x2="615.3" y2="121.8" stroke="#3f78e0" stroke-width="1.2"/><line x1="615.3" y1="121.8" x2="603.8" y2="121.8" stroke="#e03a3a" stroke-width="1.2"/><text x="608" y="118.2" font-size="6.6" font-weight="bold" fill="#3fc23f" text-anchor="middle" font-family="Liberation Sans, sans-serif">Y+</text>
<line x1="627.3" y1="110.8" x2="627.3" y2="121.8" stroke="#3f78e0" stroke-width="1.2"/><line x1="627.3" y1="121.8" x2="638.8" y2="121.8" stroke="#e03a3a" stroke-width="1.2"/><text x="634.6" y="118.2" font-size="6.6" font-weight="bold" fill="#3fc23f" text-anchor="middle" font-family="Liberation Sans, sans-serif">Y-</text>
<line x1="650.5" y1="110.8" x2="650.5" y2="121.8" stroke="#3fc23f" stroke-width="1.2"/><line x1="650.5" y1="121.8" x2="662" y2="121.8" stroke="#e03a3a" stroke-width="1.2"/><text x="657.8" y="118.2" font-size="6.6" font-weight="bold" fill="#3f78e0" text-anchor="middle" font-family="Liberation Sans, sans-serif">Z+</text>
<line x1="684.5" y1="110.8" x2="684.5" y2="121.8" stroke="#3fc23f" stroke-width="1.2"/><line x1="684.5" y1="121.8" x2="673" y2="121.8" stroke="#e03a3a" stroke-width="1.2"/><text x="677.2" y="118.2" font-size="6.6" font-weight="bold" fill="#3f78e0" text-anchor="middle" font-family="Liberation Sans, sans-serif">Z-</text>
<g stroke-width="1.3" fill="none"><line x1="702.6" y1="111" x2="702.6" y2="121" stroke="#3f78e0"/><line x1="702.6" y1="121" x2="695.5" y2="118.6" stroke="#3fc23f"/><line x1="702.6" y1="121" x2="709.5" y2="118.8" stroke="#e03a3a"/></g>
<!-- triad -->
<g font-family="Liberation Sans, sans-serif" font-weight="bold" font-style="italic"><line x1="213.6" y1="477.1" x2="228.5" y2="471.8" stroke="#b01818" stroke-width="1.4"/><circle cx="228.6" cy="471.7" r="1.5" fill="#7a1010"/><line x1="213.6" y1="477.1" x2="206.6" y2="474.8" stroke="#1fc01f" stroke-width="1.6"/><circle cx="206.4" cy="474.8" r="1.7" fill="#1fc01f"/><line x1="213.6" y1="477.1" x2="211.2" y2="462" stroke="#2222b8" stroke-width="1.5"/><text x="231" y="468.2" font-size="11.5" fill="#d42222">X</text><text x="209.6" y="468.6" font-size="9.5" fill="#22c022">Y</text><text x="213.6" y="459.8" font-size="11.5" fill="#2222c8">Z</text></g><path d="M201.1 495.8 V500.7 H223.5 V495.8" fill="none" stroke="#a4a4a4" stroke-width="1"/><text x="228.3" y="501.2" font-size="10.6" fill="#989898" font-family="Liberation Sans, sans-serif">0.5 m</text>
</svg>

<div class="abs lp"></div><div class="abs" style="left:26.4px;top:349.6px;width:49.6px;height:12.6px;background:#1e69b8;border-radius:2px 2px 0 0;color:#fff;font-size:6.9px;line-height:12.4px;text-align:center;">AI推理</div><div class="abs t7" style="left:33.6px;top:371.4px;">项目:</div><div class="abs combo" style="left:91px;top:368.6px;width:85.5px;height:12.8px;line-height:11px;padding-left:1.5px;">项目-01</div><div class="abs t7" style="left:33.6px;top:389.3px;">预测功能:</div><div class="abs cb" style="left:33.6px;top:408.09999999999997px"></div><div class="abs t7" style="left:42.3px;top:406.59999999999997px;">风阻系数</div><div class="abs dis" style="left:102.4px;top:404.8px;width:74.4px;height:12.8px;line-height:11px;padding-left:1.2px;">Transolver_Cd</div><div class="abs cb" style="left:33.6px;top:427.5px"></div><div class="abs t7" style="left:42.3px;top:426.0px;">表面压强</div><div class="abs dis" style="left:102.4px;top:424.20000000000005px;width:74.4px;height:12.8px;line-height:11px;padding-left:1.2px;">Transolver_SurfaceF</div><div class="abs cb" style="left:33.6px;top:446.9px"></div><div class="abs t7" style="left:42.3px;top:445.4px;">表面摩擦应力</div><div class="abs dis" style="left:102.4px;top:443.6px;width:74.4px;height:12.8px;line-height:11px;padding-left:1.2px;">Transolver_SurfaceV</div><div class="abs cb" style="left:33.6px;top:466.2px"></div><div class="abs t7" style="left:42.3px;top:464.7px;">速度场</div><div class="abs dis" style="left:102.4px;top:462.90000000000003px;width:74.4px;height:12.8px;line-height:11px;padding-left:1.2px;">Transolver_Velocity</div><div class="abs cb" style="left:33.6px;top:485.59999999999997px"></div><div class="abs t7" style="left:42.3px;top:484.09999999999997px;">压强场</div><div class="abs dis" style="left:102.4px;top:482.3px;width:74.4px;height:12.8px;line-height:11px;padding-left:1.2px;">Transolver_Pressure</div><div class="abs dlg"><div class="abs dttl"></div><svg class="abs" style="left:4.2px;top:3.6px" width="11.18" height="8.6" viewBox="0 0 13 10"><path d="M0 9.6 L4.2 0.4 H6.3 L2.4 9.6Z" fill="#c9dcf2"/><path d="M4.6 0.4 H6.7 L10.6 9.6 H8.4Z" fill="#fff"/><path d="M8.0 2.6 H9.3 L12.6 9.6 H11.2Z" fill="#dbe8f7"/></svg><div class="abs t7" style="left:19.6px;top:4.6px;color:#fff;font-size:6.4px;">智能优化</div><div class="abs t7" style="left:352.6px;top:3.6px;color:#fff;font-size:7.6px;font-weight:bold;">X</div><div class="abs btn" style="left:14.1px;width:62.8px;">选择形变区域</div><div class="abs btn" style="left:80.2px;width:62.4px;">微调区域</div><div class="abs btn" style="left:146.5px;width:62.5px;">确认</div><div class="abs list"></div><div class="abs cell" style="left:9.5px;top:54.4px;width:49.1px;"></div><div class="abs ct" style="left:19.1px;top:54.4px;">形变区域1</div><div class="abs cell" style="left:58.6px;top:54.4px;width:44.4px;"></div><div class="abs ct" style="left:62px;top:54.4px;">x方向幅度</div><div class="abs ct" style="left:107.2px;top:54.4px;">-0.2,0.5</div><div class="abs cell" style="left:149.8px;top:54.4px;width:44.7px;"></div><div class="abs ct" style="left:153.2px;top:54.4px;">y方向幅度</div><div class="abs ct" style="left:198.4px;top:54.4px;">-0.1,0.1</div><div class="abs cell" style="left:241.7px;top:54.4px;width:44.1px;"></div><div class="abs ct" style="left:244.7px;top:54.4px;">z方向幅度</div><div class="abs ct" style="left:289.6px;top:54.4px;">-0.1,0.3</div><div class="abs cell" style="left:332px;top:54.4px;width:9.6px;"></div><div class="abs cell" style="left:351.2px;top:54.4px;width:4.3px;"></div><div class="abs cell" style="left:9.5px;top:65.9px;width:49.1px;"></div><div class="abs ct" style="left:19.1px;top:65.9px;">形变区域2</div><div class="abs cell" style="left:58.6px;top:65.9px;width:44.4px;"></div><div class="abs ct" style="left:62px;top:65.9px;">x方向幅度</div><div class="abs ct" style="left:107.2px;top:65.9px;">-0.1,0.1</div><div class="abs cell" style="left:149.8px;top:65.9px;width:44.7px;"></div><div class="abs ct" style="left:153.2px;top:65.9px;">y方向幅度</div><div class="abs ct" style="left:198.4px;top:65.9px;">-0.1,0.1</div><div class="abs cell" style="left:241.7px;top:65.9px;width:44.1px;"></div><div class="abs ct" style="left:244.7px;top:65.9px;">z方向幅度</div><div class="abs ct" style="left:289.6px;top:65.9px;">-0.1,0.4</div><div class="abs cell" style="left:332px;top:65.9px;width:9.6px;"></div><div class="abs cell" style="left:351.2px;top:65.9px;width:4.3px;"></div><div class="abs t7" style="left:9.5px;top:152.2px;">选择优化目标</div><div class="abs t7" style="left:9.5px;top:168.8px;">选择优化算法</div><div class="abs t7" style="left:9.5px;top:186.0px;">输入遗传代数</div><div class="abs t7" style="left:184.3px;top:186.0px;">输入种群数</div><div class="abs combo" style="left:75.2px;top:150.5px;width:105px;height:12.2px;line-height:10.4px;padding-left:3.6px;">风阻系数</div><div class="abs combo" style="left:75.2px;top:166.6px;width:105px;height:12.8px;line-height:11px;padding-left:3.6px;">遗传算法</div><div class="abs inp" style="left:76px;top:183.6px;width:104.2px;height:13px;line-height:11.2px;">5</div><div class="abs inp" style="left:250.4px;top:183.6px;width:105.4px;height:13px;line-height:11.2px;">5</div><div class="abs btn" style="left:82.4px;top:257.4px;width:49.2px;height:12.2px;line-height:10px;">上一页</div><div class="abs btn" style="left:154.1px;top:257.4px;width:48.8px;height:12.2px;line-height:10px;background:#cfe5f9;">开始优化</div><div class="abs btn" style="left:226.9px;top:257.4px;width:62.8px;height:12.2px;line-height:10px;">导出结果</div><svg class="abs" style="left:210.5px;top:230px" width="8" height="11" viewBox="0 0 8 11"><path d="M0.6 0.6 V8.6 L2.6 6.8 L4 9.9 L5.2 9.4 L3.9 6.4 H6.4Z" fill="#fff" stroke="#333" stroke-width="0.7"/></svg></div><div class="abs" style="left:340.9px;top:521.4px;width:200px;text-align:center;font-size:12px;line-height:14px;letter-spacing:0.9px;color:#7a7a7a;">智能优化</div>
</body></html>
